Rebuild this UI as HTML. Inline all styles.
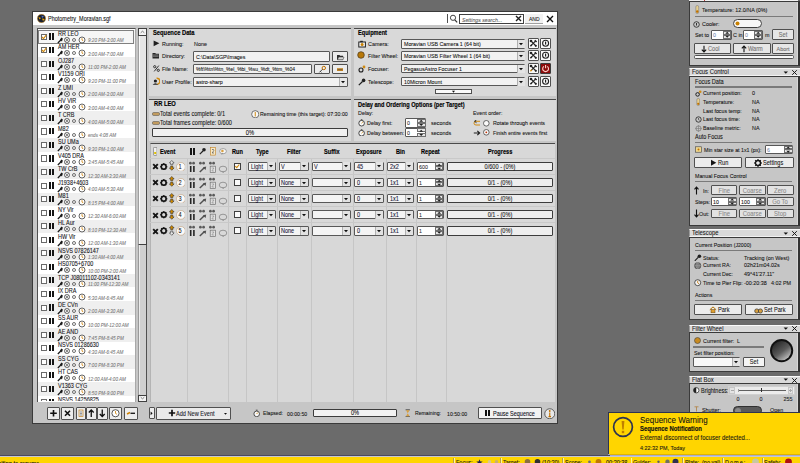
<!DOCTYPE html>
<html><head><meta charset="utf-8"><style>
html,body{margin:0;padding:0;}
body{width:800px;height:463px;overflow:hidden;position:relative;background:#6b6b6b;font-family:"Liberation Sans",sans-serif;}
div,svg{position:absolute;}
.t{white-space:nowrap;-webkit-text-stroke:0.09px currentColor;}
</style></head><body>
<div style="left:32px;top:11px;width:526px;height:413px;background:#c6c6c6;border:1px solid #3a3a3a;box-sizing:border-box;"></div>
<div style="left:33px;top:12px;width:524px;height:13px;background:#ffffff;"></div>
<svg style="left:37px;top:14px;" width="9" height="9" viewBox="0 0 9 9"><circle cx="4.5" cy="4.5" r="4.2" fill="#1a2030" stroke="#d9a040" stroke-width="0.6"/><path d="M1.5 3 L4 4 L2.5 5.5Z" fill="#f0a800"/><path d="M5 4.5 L7.8 5 L6 7Z" fill="#f0a800"/><path d="M4.5 1.5 L7 2.5 L5 4Z" fill="#5070c0"/></svg>
<div class="t" style="left:48px;transform:scaleX(0.8696);transform-origin:0 0;top:15.60px;font-size:6.32px;line-height:6.32px;color:#141414;">Photometry_Moravian.sgf</div>
<div style="left:447px;top:14px;width:0.6px;height:9px;background:#505050;"></div>
<svg style="left:449px;top:14px;" width="9" height="9" viewBox="0 0 9 9"><circle cx="4" cy="3.8" r="2.6" fill="none" stroke="#303030" stroke-width="0.9"/><path d="M5.8 5.8 L8.2 8.4" stroke="#303030" stroke-width="1.2"/></svg>
<div style="left:459px;top:13.5px;width:65px;height:10px;background:#fff;border:0.8px solid #404040;box-sizing:border-box;"></div>
<div class="t" style="left:461.5px;transform:scaleX(0.8696);transform-origin:0 0;top:16.68px;font-size:5.98px;line-height:5.98px;color:#606060;font-style:italic;">Settings search...</div>
<svg style="left:514.5px;top:15px;" width="7" height="7" viewBox="0 0 7 7"><path d="M1 1 L6 6 M6 1 L1 6" stroke="#202020" stroke-width="1.4"/></svg>
<div style="left:525px;top:13.5px;width:18px;height:10px;background:#f2f2f2;border-bottom:0.8px solid #a0a0a0;box-sizing:border-box;"></div>
<div class="t" style="left:528.5px;transform:scaleX(0.8696);transform-origin:0 0;top:16.80px;font-size:5.75px;line-height:5.75px;color:#141414;">AND</div>
<svg style="left:546px;top:14.5px;" width="8" height="8" viewBox="0 0 8 8"><path d="M1 1 L7 7 M7 1 L1 7" stroke="#101010" stroke-width="1.4"/></svg>
<div style="left:37px;top:28px;width:99px;height:374px;background:#ffffff;border-top:1px solid #505050;border-left:1px solid #505050;border-right:1px solid #a8a8a8;box-sizing:border-box;"></div>
<div style="left:38px;top:29px;width:97px;height:372px;overflow:hidden;">
<div style="left:0;top:1.00px;width:97px;height:13.55px;background:#f6f6f6;"></div>
<div style="left:0;top:1.00px;width:96px;height:13.55px;border:0.8px solid #808080;box-sizing:border-box;"></div>
<div style="left:3px;top:4.50px;width:6.2px;height:6.2px;background:#fff;border:1px solid #6a6a6a;box-sizing:border-box;"></div>
<svg style="left:3.3px;top:4.60px" width="6" height="6" viewBox="0 0 6 6"><path d="M1 3 L2.5 4.6 L5.2 1.2" fill="none" stroke="#d08a10" stroke-width="1.1"/></svg>
<div style="left:11.3px;top:4.40px;width:1.9px;height:6.2px;background:#151515;"></div>
<div style="left:14.4px;top:4.40px;width:1.9px;height:6.2px;background:#151515;"></div>
<div class="t" style="left:19.5px;transform:scaleX(0.8696);transform-origin:0 0;top:1.70px;font-size:6.32px;line-height:6.32px;color:#141418;">RR LEO</div>
<svg style="left:19px;top:6.70px" width="30" height="8" viewBox="0 0 30 8"><path d="M0.8 7 L3.8 4" stroke="#1a1a1a" stroke-width="1.2"/><path d="M2.8 3.6 L5 5.6 L5.8 2.4 L4.6 1.6Z" fill="#1a1a1a"/><circle cx="10" cy="4" r="2.6" fill="#e8e8e8" stroke="#606060" stroke-width="0.8"/><path d="M8.2 2.2 L11.8 5.8 M11.8 2.2 L8.2 5.8" stroke="#606060" stroke-width="0.7"/><circle cx="17" cy="4" r="1.5" fill="none" stroke="#606060" stroke-width="0.9"/><circle cx="25" cy="4" r="3" fill="#fff" stroke="#404040" stroke-width="0.8"/><path d="M25 2.2 V4.1 L26.3 4.8" stroke="#d08000" stroke-width="0.8" fill="none"/></svg>
<div class="t" style="left:50px;transform:scaleX(0.8696);transform-origin:0 0;top:9.23px;font-size:5.29px;line-height:5.29px;color:#7a7a7a;font-style:italic;">9:20 PM-3:00 AM</div>
<div style="left:0;top:14.55px;width:97px;height:13.55px;background:#ffffff;"></div>
<div style="left:3px;top:18.05px;width:6.2px;height:6.2px;background:#fff;border:1px solid #6a6a6a;box-sizing:border-box;"></div>
<svg style="left:3.3px;top:18.15px" width="6" height="6" viewBox="0 0 6 6"><path d="M1 3 L2.5 4.6 L5.2 1.2" fill="none" stroke="#d08a10" stroke-width="1.1"/></svg>
<div style="left:11.3px;top:17.95px;width:1.9px;height:6.2px;background:#151515;"></div>
<div style="left:14.4px;top:17.95px;width:1.9px;height:6.2px;background:#151515;"></div>
<div class="t" style="left:19.5px;transform:scaleX(0.8696);transform-origin:0 0;top:15.25px;font-size:6.32px;line-height:6.32px;color:#141418;">AM HER</div>
<svg style="left:19px;top:20.25px" width="30" height="8" viewBox="0 0 30 8"><path d="M0.8 7 L3.8 4" stroke="#1a1a1a" stroke-width="1.2"/><path d="M2.8 3.6 L5 5.6 L5.8 2.4 L4.6 1.6Z" fill="#1a1a1a"/><circle cx="10" cy="4" r="2.6" fill="#e8e8e8" stroke="#606060" stroke-width="0.8"/><path d="M8.2 2.2 L11.8 5.8 M11.8 2.2 L8.2 5.8" stroke="#606060" stroke-width="0.7"/><circle cx="17" cy="4" r="1.5" fill="none" stroke="#606060" stroke-width="0.9"/><circle cx="25" cy="4" r="3" fill="#fff" stroke="#404040" stroke-width="0.8"/><path d="M25 2.2 V4.1 L26.3 4.8" stroke="#d08000" stroke-width="0.8" fill="none"/></svg>
<div class="t" style="left:50px;transform:scaleX(0.8696);transform-origin:0 0;top:22.78px;font-size:5.29px;line-height:5.29px;color:#7a7a7a;font-style:italic;">3:00 AM-7:00 AM</div>
<div style="left:0;top:28.10px;width:97px;height:13.55px;background:#efefef;"></div>
<div style="left:3px;top:31.60px;width:6.2px;height:6.2px;background:#fff;border:1px solid #6a6a6a;box-sizing:border-box;"></div>
<div style="left:11.3px;top:31.50px;width:1.9px;height:6.2px;background:#151515;"></div>
<div style="left:14.4px;top:31.50px;width:1.9px;height:6.2px;background:#151515;"></div>
<div class="t" style="left:19.5px;transform:scaleX(0.8696);transform-origin:0 0;top:28.80px;font-size:6.32px;line-height:6.32px;color:#141418;">OJ287</div>
<svg style="left:19px;top:33.80px" width="30" height="8" viewBox="0 0 30 8"><path d="M0.8 7 L3.8 4" stroke="#1a1a1a" stroke-width="1.2"/><path d="M2.8 3.6 L5 5.6 L5.8 2.4 L4.6 1.6Z" fill="#1a1a1a"/><circle cx="10" cy="4" r="2.6" fill="#e8e8e8" stroke="#606060" stroke-width="0.8"/><path d="M8.2 2.2 L11.8 5.8 M11.8 2.2 L8.2 5.8" stroke="#606060" stroke-width="0.7"/><circle cx="17" cy="4" r="1.5" fill="none" stroke="#606060" stroke-width="0.9"/><circle cx="25" cy="4" r="3" fill="#fff" stroke="#404040" stroke-width="0.8"/><path d="M25 2.2 V4.1 L26.3 4.8" stroke="#d08000" stroke-width="0.8" fill="none"/></svg>
<div class="t" style="left:50px;transform:scaleX(0.8696);transform-origin:0 0;top:36.33px;font-size:5.29px;line-height:5.29px;color:#7a7a7a;font-style:italic;">11:00 PM-2:00 AM</div>
<div style="left:0;top:41.65px;width:97px;height:13.55px;background:#ffffff;"></div>
<div style="left:3px;top:45.15px;width:6.2px;height:6.2px;background:#fff;border:1px solid #6a6a6a;box-sizing:border-box;"></div>
<div style="left:11.3px;top:45.05px;width:1.9px;height:6.2px;background:#151515;"></div>
<div style="left:14.4px;top:45.05px;width:1.9px;height:6.2px;background:#151515;"></div>
<div class="t" style="left:19.5px;transform:scaleX(0.8696);transform-origin:0 0;top:42.35px;font-size:6.32px;line-height:6.32px;color:#141418;">V1159 ORI</div>
<svg style="left:19px;top:47.35px" width="30" height="8" viewBox="0 0 30 8"><path d="M0.8 7 L3.8 4" stroke="#1a1a1a" stroke-width="1.2"/><path d="M2.8 3.6 L5 5.6 L5.8 2.4 L4.6 1.6Z" fill="#1a1a1a"/><circle cx="10" cy="4" r="2.6" fill="#e8e8e8" stroke="#606060" stroke-width="0.8"/><path d="M8.2 2.2 L11.8 5.8 M11.8 2.2 L8.2 5.8" stroke="#606060" stroke-width="0.7"/><circle cx="17" cy="4" r="1.5" fill="none" stroke="#606060" stroke-width="0.9"/><circle cx="25" cy="4" r="3" fill="#fff" stroke="#404040" stroke-width="0.8"/><path d="M25 2.2 V4.1 L26.3 4.8" stroke="#d08000" stroke-width="0.8" fill="none"/></svg>
<div class="t" style="left:50px;transform:scaleX(0.8696);transform-origin:0 0;top:49.88px;font-size:5.29px;line-height:5.29px;color:#7a7a7a;font-style:italic;">9:20 PM-11:00 PM</div>
<div style="left:0;top:55.20px;width:97px;height:13.55px;background:#efefef;"></div>
<div style="left:3px;top:58.70px;width:6.2px;height:6.2px;background:#fff;border:1px solid #6a6a6a;box-sizing:border-box;"></div>
<div style="left:11.3px;top:58.60px;width:1.9px;height:6.2px;background:#151515;"></div>
<div style="left:14.4px;top:58.60px;width:1.9px;height:6.2px;background:#151515;"></div>
<div class="t" style="left:19.5px;transform:scaleX(0.8696);transform-origin:0 0;top:55.90px;font-size:6.32px;line-height:6.32px;color:#141418;">Z UMI</div>
<svg style="left:19px;top:60.90px" width="30" height="8" viewBox="0 0 30 8"><path d="M0.8 7 L3.8 4" stroke="#1a1a1a" stroke-width="1.2"/><path d="M2.8 3.6 L5 5.6 L5.8 2.4 L4.6 1.6Z" fill="#1a1a1a"/><circle cx="10" cy="4" r="2.6" fill="#e8e8e8" stroke="#606060" stroke-width="0.8"/><path d="M8.2 2.2 L11.8 5.8 M11.8 2.2 L8.2 5.8" stroke="#606060" stroke-width="0.7"/><circle cx="17" cy="4" r="1.5" fill="none" stroke="#606060" stroke-width="0.9"/><circle cx="25" cy="4" r="3" fill="#fff" stroke="#404040" stroke-width="0.8"/><path d="M25 2.2 V4.1 L26.3 4.8" stroke="#d08000" stroke-width="0.8" fill="none"/></svg>
<div class="t" style="left:50px;transform:scaleX(0.8696);transform-origin:0 0;top:63.43px;font-size:5.29px;line-height:5.29px;color:#7a7a7a;font-style:italic;">2:00 AM-3:00 AM</div>
<div style="left:0;top:68.75px;width:97px;height:13.55px;background:#ffffff;"></div>
<div style="left:3px;top:72.25px;width:6.2px;height:6.2px;background:#fff;border:1px solid #6a6a6a;box-sizing:border-box;"></div>
<div style="left:11.3px;top:72.15px;width:1.9px;height:6.2px;background:#151515;"></div>
<div style="left:14.4px;top:72.15px;width:1.9px;height:6.2px;background:#151515;"></div>
<div class="t" style="left:19.5px;transform:scaleX(0.8696);transform-origin:0 0;top:69.45px;font-size:6.32px;line-height:6.32px;color:#141418;">HV VIR</div>
<svg style="left:19px;top:74.45px" width="30" height="8" viewBox="0 0 30 8"><path d="M0.8 7 L3.8 4" stroke="#1a1a1a" stroke-width="1.2"/><path d="M2.8 3.6 L5 5.6 L5.8 2.4 L4.6 1.6Z" fill="#1a1a1a"/><circle cx="10" cy="4" r="2.6" fill="#e8e8e8" stroke="#606060" stroke-width="0.8"/><path d="M8.2 2.2 L11.8 5.8 M11.8 2.2 L8.2 5.8" stroke="#606060" stroke-width="0.7"/><circle cx="17" cy="4" r="1.5" fill="none" stroke="#606060" stroke-width="0.9"/><circle cx="25" cy="4" r="3" fill="#fff" stroke="#404040" stroke-width="0.8"/><path d="M25 2.2 V4.1 L26.3 4.8" stroke="#d08000" stroke-width="0.8" fill="none"/></svg>
<div class="t" style="left:50px;transform:scaleX(0.8696);transform-origin:0 0;top:76.98px;font-size:5.29px;line-height:5.29px;color:#7a7a7a;font-style:italic;">3:00 AM-4:00 AM</div>
<div style="left:0;top:82.30px;width:97px;height:13.55px;background:#efefef;"></div>
<div style="left:3px;top:85.80px;width:6.2px;height:6.2px;background:#fff;border:1px solid #6a6a6a;box-sizing:border-box;"></div>
<div style="left:11.3px;top:85.70px;width:1.9px;height:6.2px;background:#151515;"></div>
<div style="left:14.4px;top:85.70px;width:1.9px;height:6.2px;background:#151515;"></div>
<div class="t" style="left:19.5px;transform:scaleX(0.8696);transform-origin:0 0;top:83.00px;font-size:6.32px;line-height:6.32px;color:#141418;">T CRB</div>
<svg style="left:19px;top:88.00px" width="30" height="8" viewBox="0 0 30 8"><path d="M0.8 7 L3.8 4" stroke="#1a1a1a" stroke-width="1.2"/><path d="M2.8 3.6 L5 5.6 L5.8 2.4 L4.6 1.6Z" fill="#1a1a1a"/><circle cx="10" cy="4" r="2.6" fill="#e8e8e8" stroke="#606060" stroke-width="0.8"/><path d="M8.2 2.2 L11.8 5.8 M11.8 2.2 L8.2 5.8" stroke="#606060" stroke-width="0.7"/><circle cx="17" cy="4" r="1.5" fill="none" stroke="#606060" stroke-width="0.9"/><circle cx="25" cy="4" r="3" fill="#fff" stroke="#404040" stroke-width="0.8"/><path d="M25 2.2 V4.1 L26.3 4.8" stroke="#d08000" stroke-width="0.8" fill="none"/></svg>
<div class="t" style="left:50px;transform:scaleX(0.8696);transform-origin:0 0;top:90.53px;font-size:5.29px;line-height:5.29px;color:#7a7a7a;font-style:italic;">4:00 AM-5:00 AM</div>
<div style="left:0;top:95.85px;width:97px;height:13.55px;background:#ffffff;"></div>
<div style="left:3px;top:99.35px;width:6.2px;height:6.2px;background:#fff;border:1px solid #6a6a6a;box-sizing:border-box;"></div>
<div style="left:11.3px;top:99.25px;width:1.9px;height:6.2px;background:#151515;"></div>
<div style="left:14.4px;top:99.25px;width:1.9px;height:6.2px;background:#151515;"></div>
<div class="t" style="left:19.5px;transform:scaleX(0.8696);transform-origin:0 0;top:96.55px;font-size:6.32px;line-height:6.32px;color:#141418;">M82</div>
<svg style="left:19px;top:101.55px" width="30" height="8" viewBox="0 0 30 8"><path d="M0.8 7 L3.8 4" stroke="#1a1a1a" stroke-width="1.2"/><path d="M2.8 3.6 L5 5.6 L5.8 2.4 L4.6 1.6Z" fill="#1a1a1a"/><circle cx="10" cy="4" r="2.6" fill="#e8e8e8" stroke="#606060" stroke-width="0.8"/><path d="M8.2 2.2 L11.8 5.8 M11.8 2.2 L8.2 5.8" stroke="#606060" stroke-width="0.7"/><circle cx="17" cy="4" r="1.5" fill="none" stroke="#606060" stroke-width="0.9"/><circle cx="25" cy="4" r="3" fill="#fff" stroke="#404040" stroke-width="0.8"/><path d="M25 2.2 V4.1 L26.3 4.8" stroke="#d08000" stroke-width="0.8" fill="none"/></svg>
<div class="t" style="left:50px;transform:scaleX(0.8696);transform-origin:0 0;top:104.08px;font-size:5.29px;line-height:5.29px;color:#7a7a7a;font-style:italic;">ends 4:08 AM</div>
<div style="left:0;top:109.40px;width:97px;height:13.55px;background:#efefef;"></div>
<div style="left:3px;top:112.90px;width:6.2px;height:6.2px;background:#fff;border:1px solid #6a6a6a;box-sizing:border-box;"></div>
<div style="left:11.3px;top:112.80px;width:1.9px;height:6.2px;background:#151515;"></div>
<div style="left:14.4px;top:112.80px;width:1.9px;height:6.2px;background:#151515;"></div>
<div class="t" style="left:19.5px;transform:scaleX(0.8696);transform-origin:0 0;top:110.10px;font-size:6.32px;line-height:6.32px;color:#141418;">SU UMa</div>
<svg style="left:19px;top:115.10px" width="30" height="8" viewBox="0 0 30 8"><path d="M0.8 7 L3.8 4" stroke="#1a1a1a" stroke-width="1.2"/><path d="M2.8 3.6 L5 5.6 L5.8 2.4 L4.6 1.6Z" fill="#1a1a1a"/><circle cx="10" cy="4" r="2.6" fill="#e8e8e8" stroke="#606060" stroke-width="0.8"/><path d="M8.2 2.2 L11.8 5.8 M11.8 2.2 L8.2 5.8" stroke="#606060" stroke-width="0.7"/><circle cx="17" cy="4" r="1.5" fill="none" stroke="#606060" stroke-width="0.9"/><circle cx="25" cy="4" r="3" fill="#fff" stroke="#404040" stroke-width="0.8"/><path d="M25 2.2 V4.1 L26.3 4.8" stroke="#d08000" stroke-width="0.8" fill="none"/></svg>
<div class="t" style="left:50px;transform:scaleX(0.8696);transform-origin:0 0;top:117.63px;font-size:5.29px;line-height:5.29px;color:#7a7a7a;font-style:italic;">9:30 PM-1:00 AM</div>
<div style="left:0;top:122.95px;width:97px;height:13.55px;background:#ffffff;"></div>
<div style="left:3px;top:126.45px;width:6.2px;height:6.2px;background:#fff;border:1px solid #6a6a6a;box-sizing:border-box;"></div>
<div style="left:11.3px;top:126.35px;width:1.9px;height:6.2px;background:#151515;"></div>
<div style="left:14.4px;top:126.35px;width:1.9px;height:6.2px;background:#151515;"></div>
<div class="t" style="left:19.5px;transform:scaleX(0.8696);transform-origin:0 0;top:123.65px;font-size:6.32px;line-height:6.32px;color:#141418;">V405 DRA</div>
<svg style="left:19px;top:128.65px" width="30" height="8" viewBox="0 0 30 8"><path d="M0.8 7 L3.8 4" stroke="#1a1a1a" stroke-width="1.2"/><path d="M2.8 3.6 L5 5.6 L5.8 2.4 L4.6 1.6Z" fill="#1a1a1a"/><circle cx="10" cy="4" r="2.6" fill="#e8e8e8" stroke="#606060" stroke-width="0.8"/><path d="M8.2 2.2 L11.8 5.8 M11.8 2.2 L8.2 5.8" stroke="#606060" stroke-width="0.7"/><circle cx="17" cy="4" r="1.5" fill="none" stroke="#606060" stroke-width="0.9"/><circle cx="25" cy="4" r="3" fill="#fff" stroke="#404040" stroke-width="0.8"/><path d="M25 2.2 V4.1 L26.3 4.8" stroke="#d08000" stroke-width="0.8" fill="none"/></svg>
<div class="t" style="left:50px;transform:scaleX(0.8696);transform-origin:0 0;top:131.18px;font-size:5.29px;line-height:5.29px;color:#7a7a7a;font-style:italic;">3:45 AM-5:45 AM</div>
<div style="left:0;top:136.50px;width:97px;height:13.55px;background:#efefef;"></div>
<div style="left:3px;top:140.00px;width:6.2px;height:6.2px;background:#fff;border:1px solid #6a6a6a;box-sizing:border-box;"></div>
<div style="left:11.3px;top:139.90px;width:1.9px;height:6.2px;background:#151515;"></div>
<div style="left:14.4px;top:139.90px;width:1.9px;height:6.2px;background:#151515;"></div>
<div class="t" style="left:19.5px;transform:scaleX(0.8696);transform-origin:0 0;top:137.20px;font-size:6.32px;line-height:6.32px;color:#141418;">TW CrB</div>
<svg style="left:19px;top:142.20px" width="30" height="8" viewBox="0 0 30 8"><path d="M0.8 7 L3.8 4" stroke="#1a1a1a" stroke-width="1.2"/><path d="M2.8 3.6 L5 5.6 L5.8 2.4 L4.6 1.6Z" fill="#1a1a1a"/><circle cx="10" cy="4" r="2.6" fill="#e8e8e8" stroke="#606060" stroke-width="0.8"/><path d="M8.2 2.2 L11.8 5.8 M11.8 2.2 L8.2 5.8" stroke="#606060" stroke-width="0.7"/><circle cx="17" cy="4" r="1.5" fill="none" stroke="#606060" stroke-width="0.9"/><circle cx="25" cy="4" r="3" fill="#fff" stroke="#404040" stroke-width="0.8"/><path d="M25 2.2 V4.1 L26.3 4.8" stroke="#d08000" stroke-width="0.8" fill="none"/></svg>
<div class="t" style="left:50px;transform:scaleX(0.8696);transform-origin:0 0;top:144.73px;font-size:5.29px;line-height:5.29px;color:#7a7a7a;font-style:italic;">12:30 AM-3:30 AM</div>
<div style="left:0;top:150.05px;width:97px;height:13.55px;background:#ffffff;"></div>
<div style="left:3px;top:153.55px;width:6.2px;height:6.2px;background:#fff;border:1px solid #6a6a6a;box-sizing:border-box;"></div>
<div style="left:11.3px;top:153.45px;width:1.9px;height:6.2px;background:#151515;"></div>
<div style="left:14.4px;top:153.45px;width:1.9px;height:6.2px;background:#151515;"></div>
<div class="t" style="left:19.5px;transform:scaleX(0.8696);transform-origin:0 0;top:150.75px;font-size:6.32px;line-height:6.32px;color:#141418;">J1938+4603</div>
<svg style="left:19px;top:155.75px" width="30" height="8" viewBox="0 0 30 8"><path d="M0.8 7 L3.8 4" stroke="#1a1a1a" stroke-width="1.2"/><path d="M2.8 3.6 L5 5.6 L5.8 2.4 L4.6 1.6Z" fill="#1a1a1a"/><circle cx="10" cy="4" r="2.6" fill="#e8e8e8" stroke="#606060" stroke-width="0.8"/><path d="M8.2 2.2 L11.8 5.8 M11.8 2.2 L8.2 5.8" stroke="#606060" stroke-width="0.7"/><circle cx="17" cy="4" r="1.5" fill="none" stroke="#606060" stroke-width="0.9"/><circle cx="25" cy="4" r="3" fill="#fff" stroke="#404040" stroke-width="0.8"/><path d="M25 2.2 V4.1 L26.3 4.8" stroke="#d08000" stroke-width="0.8" fill="none"/></svg>
<div class="t" style="left:50px;transform:scaleX(0.8696);transform-origin:0 0;top:158.28px;font-size:5.29px;line-height:5.29px;color:#7a7a7a;font-style:italic;">4:00 AM-5:30 AM</div>
<div style="left:0;top:163.60px;width:97px;height:13.55px;background:#efefef;"></div>
<div style="left:3px;top:167.10px;width:6.2px;height:6.2px;background:#fff;border:1px solid #6a6a6a;box-sizing:border-box;"></div>
<div style="left:11.3px;top:167.00px;width:1.9px;height:6.2px;background:#151515;"></div>
<div style="left:14.4px;top:167.00px;width:1.9px;height:6.2px;background:#151515;"></div>
<div class="t" style="left:19.5px;transform:scaleX(0.8696);transform-origin:0 0;top:164.30px;font-size:6.32px;line-height:6.32px;color:#141418;">M81</div>
<svg style="left:19px;top:169.30px" width="30" height="8" viewBox="0 0 30 8"><path d="M0.8 7 L3.8 4" stroke="#1a1a1a" stroke-width="1.2"/><path d="M2.8 3.6 L5 5.6 L5.8 2.4 L4.6 1.6Z" fill="#1a1a1a"/><circle cx="10" cy="4" r="2.6" fill="#e8e8e8" stroke="#606060" stroke-width="0.8"/><path d="M8.2 2.2 L11.8 5.8 M11.8 2.2 L8.2 5.8" stroke="#606060" stroke-width="0.7"/><circle cx="17" cy="4" r="1.5" fill="none" stroke="#606060" stroke-width="0.9"/><circle cx="25" cy="4" r="3" fill="#fff" stroke="#404040" stroke-width="0.8"/><path d="M25 2.2 V4.1 L26.3 4.8" stroke="#d08000" stroke-width="0.8" fill="none"/></svg>
<div class="t" style="left:50px;transform:scaleX(0.8696);transform-origin:0 0;top:171.83px;font-size:5.29px;line-height:5.29px;color:#7a7a7a;font-style:italic;">8:15 PM-4:00 AM</div>
<div style="left:0;top:177.15px;width:97px;height:13.55px;background:#ffffff;"></div>
<div style="left:3px;top:180.65px;width:6.2px;height:6.2px;background:#fff;border:1px solid #6a6a6a;box-sizing:border-box;"></div>
<div style="left:11.3px;top:180.55px;width:1.9px;height:6.2px;background:#151515;"></div>
<div style="left:14.4px;top:180.55px;width:1.9px;height:6.2px;background:#151515;"></div>
<div class="t" style="left:19.5px;transform:scaleX(0.8696);transform-origin:0 0;top:177.85px;font-size:6.32px;line-height:6.32px;color:#141418;">NY Vir</div>
<svg style="left:19px;top:182.85px" width="30" height="8" viewBox="0 0 30 8"><path d="M0.8 7 L3.8 4" stroke="#1a1a1a" stroke-width="1.2"/><path d="M2.8 3.6 L5 5.6 L5.8 2.4 L4.6 1.6Z" fill="#1a1a1a"/><circle cx="10" cy="4" r="2.6" fill="#e8e8e8" stroke="#606060" stroke-width="0.8"/><path d="M8.2 2.2 L11.8 5.8 M11.8 2.2 L8.2 5.8" stroke="#606060" stroke-width="0.7"/><circle cx="17" cy="4" r="1.5" fill="none" stroke="#606060" stroke-width="0.9"/><circle cx="25" cy="4" r="3" fill="#fff" stroke="#404040" stroke-width="0.8"/><path d="M25 2.2 V4.1 L26.3 4.8" stroke="#d08000" stroke-width="0.8" fill="none"/></svg>
<div class="t" style="left:50px;transform:scaleX(0.8696);transform-origin:0 0;top:185.38px;font-size:5.29px;line-height:5.29px;color:#7a7a7a;font-style:italic;">12:30 AM-6:00 AM</div>
<div style="left:0;top:190.70px;width:97px;height:13.55px;background:#efefef;"></div>
<div style="left:3px;top:194.20px;width:6.2px;height:6.2px;background:#fff;border:1px solid #6a6a6a;box-sizing:border-box;"></div>
<div style="left:11.3px;top:194.10px;width:1.9px;height:6.2px;background:#151515;"></div>
<div style="left:14.4px;top:194.10px;width:1.9px;height:6.2px;background:#151515;"></div>
<div class="t" style="left:19.5px;transform:scaleX(0.8696);transform-origin:0 0;top:191.40px;font-size:6.32px;line-height:6.32px;color:#141418;">HL Aur</div>
<svg style="left:19px;top:196.40px" width="30" height="8" viewBox="0 0 30 8"><path d="M0.8 7 L3.8 4" stroke="#1a1a1a" stroke-width="1.2"/><path d="M2.8 3.6 L5 5.6 L5.8 2.4 L4.6 1.6Z" fill="#1a1a1a"/><circle cx="10" cy="4" r="2.6" fill="#e8e8e8" stroke="#606060" stroke-width="0.8"/><path d="M8.2 2.2 L11.8 5.8 M11.8 2.2 L8.2 5.8" stroke="#606060" stroke-width="0.7"/><circle cx="17" cy="4" r="1.5" fill="none" stroke="#606060" stroke-width="0.9"/><circle cx="25" cy="4" r="3" fill="#fff" stroke="#404040" stroke-width="0.8"/><path d="M25 2.2 V4.1 L26.3 4.8" stroke="#d08000" stroke-width="0.8" fill="none"/></svg>
<div class="t" style="left:50px;transform:scaleX(0.8696);transform-origin:0 0;top:198.93px;font-size:5.29px;line-height:5.29px;color:#7a7a7a;font-style:italic;">8:10 PM-12:30 AM</div>
<div style="left:0;top:204.25px;width:97px;height:13.55px;background:#ffffff;"></div>
<div style="left:3px;top:207.75px;width:6.2px;height:6.2px;background:#fff;border:1px solid #6a6a6a;box-sizing:border-box;"></div>
<div style="left:11.3px;top:207.65px;width:1.9px;height:6.2px;background:#151515;"></div>
<div style="left:14.4px;top:207.65px;width:1.9px;height:6.2px;background:#151515;"></div>
<div class="t" style="left:19.5px;transform:scaleX(0.8696);transform-origin:0 0;top:204.95px;font-size:6.32px;line-height:6.32px;color:#141418;">HW Vir</div>
<svg style="left:19px;top:209.95px" width="30" height="8" viewBox="0 0 30 8"><path d="M0.8 7 L3.8 4" stroke="#1a1a1a" stroke-width="1.2"/><path d="M2.8 3.6 L5 5.6 L5.8 2.4 L4.6 1.6Z" fill="#1a1a1a"/><circle cx="10" cy="4" r="2.6" fill="#e8e8e8" stroke="#606060" stroke-width="0.8"/><path d="M8.2 2.2 L11.8 5.8 M11.8 2.2 L8.2 5.8" stroke="#606060" stroke-width="0.7"/><circle cx="17" cy="4" r="1.5" fill="none" stroke="#606060" stroke-width="0.9"/><circle cx="25" cy="4" r="3" fill="#fff" stroke="#404040" stroke-width="0.8"/><path d="M25 2.2 V4.1 L26.3 4.8" stroke="#d08000" stroke-width="0.8" fill="none"/></svg>
<div class="t" style="left:50px;transform:scaleX(0.8696);transform-origin:0 0;top:212.48px;font-size:5.29px;line-height:5.29px;color:#7a7a7a;font-style:italic;">12:00 AM-1:30 AM</div>
<div style="left:0;top:217.80px;width:97px;height:13.55px;background:#efefef;"></div>
<div style="left:3px;top:221.30px;width:6.2px;height:6.2px;background:#fff;border:1px solid #6a6a6a;box-sizing:border-box;"></div>
<div style="left:11.3px;top:221.20px;width:1.9px;height:6.2px;background:#151515;"></div>
<div style="left:14.4px;top:221.20px;width:1.9px;height:6.2px;background:#151515;"></div>
<div class="t" style="left:19.5px;transform:scaleX(0.8696);transform-origin:0 0;top:218.50px;font-size:6.32px;line-height:6.32px;color:#141418;">NSVS 07826147</div>
<svg style="left:19px;top:223.50px" width="30" height="8" viewBox="0 0 30 8"><path d="M0.8 7 L3.8 4" stroke="#1a1a1a" stroke-width="1.2"/><path d="M2.8 3.6 L5 5.6 L5.8 2.4 L4.6 1.6Z" fill="#1a1a1a"/><circle cx="10" cy="4" r="2.6" fill="#e8e8e8" stroke="#606060" stroke-width="0.8"/><path d="M8.2 2.2 L11.8 5.8 M11.8 2.2 L8.2 5.8" stroke="#606060" stroke-width="0.7"/><circle cx="17" cy="4" r="1.5" fill="none" stroke="#606060" stroke-width="0.9"/><circle cx="25" cy="4" r="3" fill="#fff" stroke="#404040" stroke-width="0.8"/><path d="M25 2.2 V4.1 L26.3 4.8" stroke="#d08000" stroke-width="0.8" fill="none"/></svg>
<div class="t" style="left:50px;transform:scaleX(0.8696);transform-origin:0 0;top:226.03px;font-size:5.29px;line-height:5.29px;color:#7a7a7a;font-style:italic;">1:30 AM-4:00 AM</div>
<div style="left:0;top:231.35px;width:97px;height:13.55px;background:#ffffff;"></div>
<div style="left:3px;top:234.85px;width:6.2px;height:6.2px;background:#fff;border:1px solid #6a6a6a;box-sizing:border-box;"></div>
<div style="left:11.3px;top:234.75px;width:1.9px;height:6.2px;background:#151515;"></div>
<div style="left:14.4px;top:234.75px;width:1.9px;height:6.2px;background:#151515;"></div>
<div class="t" style="left:19.5px;transform:scaleX(0.8696);transform-origin:0 0;top:232.05px;font-size:6.32px;line-height:6.32px;color:#141418;">HS0705+6700</div>
<svg style="left:19px;top:237.05px" width="30" height="8" viewBox="0 0 30 8"><path d="M0.8 7 L3.8 4" stroke="#1a1a1a" stroke-width="1.2"/><path d="M2.8 3.6 L5 5.6 L5.8 2.4 L4.6 1.6Z" fill="#1a1a1a"/><circle cx="10" cy="4" r="2.6" fill="#e8e8e8" stroke="#606060" stroke-width="0.8"/><path d="M8.2 2.2 L11.8 5.8 M11.8 2.2 L8.2 5.8" stroke="#606060" stroke-width="0.7"/><circle cx="17" cy="4" r="1.5" fill="none" stroke="#606060" stroke-width="0.9"/><circle cx="25" cy="4" r="3" fill="#fff" stroke="#404040" stroke-width="0.8"/><path d="M25 2.2 V4.1 L26.3 4.8" stroke="#d08000" stroke-width="0.8" fill="none"/></svg>
<div class="t" style="left:50px;transform:scaleX(0.8696);transform-origin:0 0;top:239.58px;font-size:5.29px;line-height:5.29px;color:#7a7a7a;font-style:italic;">10:00 PM-2:00 AM</div>
<div style="left:0;top:244.90px;width:97px;height:13.55px;background:#efefef;"></div>
<div style="left:3px;top:248.40px;width:6.2px;height:6.2px;background:#fff;border:1px solid #6a6a6a;box-sizing:border-box;"></div>
<div style="left:11.3px;top:248.30px;width:1.9px;height:6.2px;background:#151515;"></div>
<div style="left:14.4px;top:248.30px;width:1.9px;height:6.2px;background:#151515;"></div>
<div class="t" style="left:19.5px;transform:scaleX(0.8696);transform-origin:0 0;top:245.60px;font-size:6.32px;line-height:6.32px;color:#141418;">TCP J08011102-0343141</div>
<svg style="left:19px;top:250.60px" width="30" height="8" viewBox="0 0 30 8"><path d="M0.8 7 L3.8 4" stroke="#1a1a1a" stroke-width="1.2"/><path d="M2.8 3.6 L5 5.6 L5.8 2.4 L4.6 1.6Z" fill="#1a1a1a"/><circle cx="10" cy="4" r="2.6" fill="#e8e8e8" stroke="#606060" stroke-width="0.8"/><path d="M8.2 2.2 L11.8 5.8 M11.8 2.2 L8.2 5.8" stroke="#606060" stroke-width="0.7"/><circle cx="17" cy="4" r="1.5" fill="none" stroke="#606060" stroke-width="0.9"/><circle cx="25" cy="4" r="3" fill="#fff" stroke="#404040" stroke-width="0.8"/><path d="M25 2.2 V4.1 L26.3 4.8" stroke="#d08000" stroke-width="0.8" fill="none"/></svg>
<div class="t" style="left:50px;transform:scaleX(0.8696);transform-origin:0 0;top:253.13px;font-size:5.29px;line-height:5.29px;color:#7a7a7a;font-style:italic;">11:00 PM-12:30 AM</div>
<div style="left:0;top:258.45px;width:97px;height:13.55px;background:#ffffff;"></div>
<div style="left:3px;top:261.95px;width:6.2px;height:6.2px;background:#fff;border:1px solid #6a6a6a;box-sizing:border-box;"></div>
<div style="left:11.3px;top:261.85px;width:1.9px;height:6.2px;background:#151515;"></div>
<div style="left:14.4px;top:261.85px;width:1.9px;height:6.2px;background:#151515;"></div>
<div class="t" style="left:19.5px;transform:scaleX(0.8696);transform-origin:0 0;top:259.15px;font-size:6.32px;line-height:6.32px;color:#141418;">IX DRA</div>
<svg style="left:19px;top:264.15px" width="30" height="8" viewBox="0 0 30 8"><path d="M0.8 7 L3.8 4" stroke="#1a1a1a" stroke-width="1.2"/><path d="M2.8 3.6 L5 5.6 L5.8 2.4 L4.6 1.6Z" fill="#1a1a1a"/><circle cx="10" cy="4" r="2.6" fill="#e8e8e8" stroke="#606060" stroke-width="0.8"/><path d="M8.2 2.2 L11.8 5.8 M11.8 2.2 L8.2 5.8" stroke="#606060" stroke-width="0.7"/><circle cx="17" cy="4" r="1.5" fill="none" stroke="#606060" stroke-width="0.9"/><circle cx="25" cy="4" r="3" fill="#fff" stroke="#404040" stroke-width="0.8"/><path d="M25 2.2 V4.1 L26.3 4.8" stroke="#d08000" stroke-width="0.8" fill="none"/></svg>
<div class="t" style="left:50px;transform:scaleX(0.8696);transform-origin:0 0;top:266.68px;font-size:5.29px;line-height:5.29px;color:#7a7a7a;font-style:italic;">5:30 AM-6:45 AM</div>
<div style="left:0;top:272.00px;width:97px;height:13.55px;background:#efefef;"></div>
<div style="left:3px;top:275.50px;width:6.2px;height:6.2px;background:#fff;border:1px solid #6a6a6a;box-sizing:border-box;"></div>
<div style="left:11.3px;top:275.40px;width:1.9px;height:6.2px;background:#151515;"></div>
<div style="left:14.4px;top:275.40px;width:1.9px;height:6.2px;background:#151515;"></div>
<div class="t" style="left:19.5px;transform:scaleX(0.8696);transform-origin:0 0;top:272.70px;font-size:6.32px;line-height:6.32px;color:#141418;">DE CVn</div>
<svg style="left:19px;top:277.70px" width="30" height="8" viewBox="0 0 30 8"><path d="M0.8 7 L3.8 4" stroke="#1a1a1a" stroke-width="1.2"/><path d="M2.8 3.6 L5 5.6 L5.8 2.4 L4.6 1.6Z" fill="#1a1a1a"/><circle cx="10" cy="4" r="2.6" fill="#e8e8e8" stroke="#606060" stroke-width="0.8"/><path d="M8.2 2.2 L11.8 5.8 M11.8 2.2 L8.2 5.8" stroke="#606060" stroke-width="0.7"/><circle cx="17" cy="4" r="1.5" fill="none" stroke="#606060" stroke-width="0.9"/><circle cx="25" cy="4" r="3" fill="#fff" stroke="#404040" stroke-width="0.8"/><path d="M25 2.2 V4.1 L26.3 4.8" stroke="#d08000" stroke-width="0.8" fill="none"/></svg>
<div class="t" style="left:50px;transform:scaleX(0.8696);transform-origin:0 0;top:280.23px;font-size:5.29px;line-height:5.29px;color:#7a7a7a;font-style:italic;">2:00 AM-3:30 AM</div>
<div style="left:0;top:285.55px;width:97px;height:13.55px;background:#ffffff;"></div>
<div style="left:3px;top:289.05px;width:6.2px;height:6.2px;background:#fff;border:1px solid #6a6a6a;box-sizing:border-box;"></div>
<div style="left:11.3px;top:288.95px;width:1.9px;height:6.2px;background:#151515;"></div>
<div style="left:14.4px;top:288.95px;width:1.9px;height:6.2px;background:#151515;"></div>
<div class="t" style="left:19.5px;transform:scaleX(0.8696);transform-origin:0 0;top:286.25px;font-size:6.32px;line-height:6.32px;color:#141418;">SS AUR</div>
<svg style="left:19px;top:291.25px" width="30" height="8" viewBox="0 0 30 8"><path d="M0.8 7 L3.8 4" stroke="#1a1a1a" stroke-width="1.2"/><path d="M2.8 3.6 L5 5.6 L5.8 2.4 L4.6 1.6Z" fill="#1a1a1a"/><circle cx="10" cy="4" r="2.6" fill="#e8e8e8" stroke="#606060" stroke-width="0.8"/><path d="M8.2 2.2 L11.8 5.8 M11.8 2.2 L8.2 5.8" stroke="#606060" stroke-width="0.7"/><circle cx="17" cy="4" r="1.5" fill="none" stroke="#606060" stroke-width="0.9"/><circle cx="25" cy="4" r="3" fill="#fff" stroke="#404040" stroke-width="0.8"/><path d="M25 2.2 V4.1 L26.3 4.8" stroke="#d08000" stroke-width="0.8" fill="none"/></svg>
<div class="t" style="left:50px;transform:scaleX(0.8696);transform-origin:0 0;top:293.78px;font-size:5.29px;line-height:5.29px;color:#7a7a7a;font-style:italic;">10:00 PM-12:00 AM</div>
<div style="left:0;top:299.10px;width:97px;height:13.55px;background:#efefef;"></div>
<div style="left:3px;top:302.60px;width:6.2px;height:6.2px;background:#fff;border:1px solid #6a6a6a;box-sizing:border-box;"></div>
<div style="left:11.3px;top:302.50px;width:1.9px;height:6.2px;background:#151515;"></div>
<div style="left:14.4px;top:302.50px;width:1.9px;height:6.2px;background:#151515;"></div>
<div class="t" style="left:19.5px;transform:scaleX(0.8696);transform-origin:0 0;top:299.80px;font-size:6.32px;line-height:6.32px;color:#141418;">AE AND</div>
<svg style="left:19px;top:304.80px" width="30" height="8" viewBox="0 0 30 8"><path d="M0.8 7 L3.8 4" stroke="#1a1a1a" stroke-width="1.2"/><path d="M2.8 3.6 L5 5.6 L5.8 2.4 L4.6 1.6Z" fill="#1a1a1a"/><circle cx="10" cy="4" r="2.6" fill="#e8e8e8" stroke="#606060" stroke-width="0.8"/><path d="M8.2 2.2 L11.8 5.8 M11.8 2.2 L8.2 5.8" stroke="#606060" stroke-width="0.7"/><circle cx="17" cy="4" r="1.5" fill="none" stroke="#606060" stroke-width="0.9"/><circle cx="25" cy="4" r="3" fill="#fff" stroke="#404040" stroke-width="0.8"/><path d="M25 2.2 V4.1 L26.3 4.8" stroke="#d08000" stroke-width="0.8" fill="none"/></svg>
<div class="t" style="left:50px;transform:scaleX(0.8696);transform-origin:0 0;top:307.33px;font-size:5.29px;line-height:5.29px;color:#7a7a7a;font-style:italic;">7:45 PM-8:45 PM</div>
<div style="left:0;top:312.65px;width:97px;height:13.55px;background:#ffffff;"></div>
<div style="left:3px;top:316.15px;width:6.2px;height:6.2px;background:#fff;border:1px solid #6a6a6a;box-sizing:border-box;"></div>
<div style="left:11.3px;top:316.05px;width:1.9px;height:6.2px;background:#151515;"></div>
<div style="left:14.4px;top:316.05px;width:1.9px;height:6.2px;background:#151515;"></div>
<div class="t" style="left:19.5px;transform:scaleX(0.8696);transform-origin:0 0;top:313.35px;font-size:6.32px;line-height:6.32px;color:#141418;">NSVS 01286630</div>
<svg style="left:19px;top:318.35px" width="30" height="8" viewBox="0 0 30 8"><path d="M0.8 7 L3.8 4" stroke="#1a1a1a" stroke-width="1.2"/><path d="M2.8 3.6 L5 5.6 L5.8 2.4 L4.6 1.6Z" fill="#1a1a1a"/><circle cx="10" cy="4" r="2.6" fill="#e8e8e8" stroke="#606060" stroke-width="0.8"/><path d="M8.2 2.2 L11.8 5.8 M11.8 2.2 L8.2 5.8" stroke="#606060" stroke-width="0.7"/><circle cx="17" cy="4" r="1.5" fill="none" stroke="#606060" stroke-width="0.9"/><circle cx="25" cy="4" r="3" fill="#fff" stroke="#404040" stroke-width="0.8"/><path d="M25 2.2 V4.1 L26.3 4.8" stroke="#d08000" stroke-width="0.8" fill="none"/></svg>
<div class="t" style="left:50px;transform:scaleX(0.8696);transform-origin:0 0;top:320.88px;font-size:5.29px;line-height:5.29px;color:#7a7a7a;font-style:italic;">4:30 AM-6:45 AM</div>
<div style="left:0;top:326.20px;width:97px;height:13.55px;background:#efefef;"></div>
<div style="left:3px;top:329.70px;width:6.2px;height:6.2px;background:#fff;border:1px solid #6a6a6a;box-sizing:border-box;"></div>
<div style="left:11.3px;top:329.60px;width:1.9px;height:6.2px;background:#151515;"></div>
<div style="left:14.4px;top:329.60px;width:1.9px;height:6.2px;background:#151515;"></div>
<div class="t" style="left:19.5px;transform:scaleX(0.8696);transform-origin:0 0;top:326.90px;font-size:6.32px;line-height:6.32px;color:#141418;">SS CYG</div>
<svg style="left:19px;top:331.90px" width="30" height="8" viewBox="0 0 30 8"><path d="M0.8 7 L3.8 4" stroke="#1a1a1a" stroke-width="1.2"/><path d="M2.8 3.6 L5 5.6 L5.8 2.4 L4.6 1.6Z" fill="#1a1a1a"/><circle cx="10" cy="4" r="2.6" fill="#e8e8e8" stroke="#606060" stroke-width="0.8"/><path d="M8.2 2.2 L11.8 5.8 M11.8 2.2 L8.2 5.8" stroke="#606060" stroke-width="0.7"/><circle cx="17" cy="4" r="1.5" fill="none" stroke="#606060" stroke-width="0.9"/><circle cx="25" cy="4" r="3" fill="#fff" stroke="#404040" stroke-width="0.8"/><path d="M25 2.2 V4.1 L26.3 4.8" stroke="#d08000" stroke-width="0.8" fill="none"/></svg>
<div class="t" style="left:50px;transform:scaleX(0.8696);transform-origin:0 0;top:334.43px;font-size:5.29px;line-height:5.29px;color:#7a7a7a;font-style:italic;">7:00 PM-8:30 PM</div>
<div style="left:0;top:339.75px;width:97px;height:13.55px;background:#ffffff;"></div>
<div style="left:3px;top:343.25px;width:6.2px;height:6.2px;background:#fff;border:1px solid #6a6a6a;box-sizing:border-box;"></div>
<div style="left:11.3px;top:343.15px;width:1.9px;height:6.2px;background:#151515;"></div>
<div style="left:14.4px;top:343.15px;width:1.9px;height:6.2px;background:#151515;"></div>
<div class="t" style="left:19.5px;transform:scaleX(0.8696);transform-origin:0 0;top:340.45px;font-size:6.32px;line-height:6.32px;color:#141418;">HT CAS</div>
<svg style="left:19px;top:345.45px" width="30" height="8" viewBox="0 0 30 8"><path d="M0.8 7 L3.8 4" stroke="#1a1a1a" stroke-width="1.2"/><path d="M2.8 3.6 L5 5.6 L5.8 2.4 L4.6 1.6Z" fill="#1a1a1a"/><circle cx="10" cy="4" r="2.6" fill="#e8e8e8" stroke="#606060" stroke-width="0.8"/><path d="M8.2 2.2 L11.8 5.8 M11.8 2.2 L8.2 5.8" stroke="#606060" stroke-width="0.7"/><circle cx="17" cy="4" r="1.5" fill="none" stroke="#606060" stroke-width="0.9"/><circle cx="25" cy="4" r="3" fill="#fff" stroke="#404040" stroke-width="0.8"/><path d="M25 2.2 V4.1 L26.3 4.8" stroke="#d08000" stroke-width="0.8" fill="none"/></svg>
<div class="t" style="left:50px;transform:scaleX(0.8696);transform-origin:0 0;top:347.98px;font-size:5.29px;line-height:5.29px;color:#7a7a7a;font-style:italic;">12:00 AM-4:00 AM</div>
<div style="left:0;top:353.30px;width:97px;height:13.55px;background:#efefef;"></div>
<div style="left:3px;top:356.80px;width:6.2px;height:6.2px;background:#fff;border:1px solid #6a6a6a;box-sizing:border-box;"></div>
<div style="left:11.3px;top:356.70px;width:1.9px;height:6.2px;background:#151515;"></div>
<div style="left:14.4px;top:356.70px;width:1.9px;height:6.2px;background:#151515;"></div>
<div class="t" style="left:19.5px;transform:scaleX(0.8696);transform-origin:0 0;top:354.00px;font-size:6.32px;line-height:6.32px;color:#141418;">V1363 CYG</div>
<svg style="left:19px;top:359.00px" width="30" height="8" viewBox="0 0 30 8"><path d="M0.8 7 L3.8 4" stroke="#1a1a1a" stroke-width="1.2"/><path d="M2.8 3.6 L5 5.6 L5.8 2.4 L4.6 1.6Z" fill="#1a1a1a"/><circle cx="10" cy="4" r="2.6" fill="#e8e8e8" stroke="#606060" stroke-width="0.8"/><path d="M8.2 2.2 L11.8 5.8 M11.8 2.2 L8.2 5.8" stroke="#606060" stroke-width="0.7"/><circle cx="17" cy="4" r="1.5" fill="none" stroke="#606060" stroke-width="0.9"/><circle cx="25" cy="4" r="3" fill="#fff" stroke="#404040" stroke-width="0.8"/><path d="M25 2.2 V4.1 L26.3 4.8" stroke="#d08000" stroke-width="0.8" fill="none"/></svg>
<div class="t" style="left:50px;transform:scaleX(0.8696);transform-origin:0 0;top:361.53px;font-size:5.29px;line-height:5.29px;color:#7a7a7a;font-style:italic;">8:50 PM-9:00 PM</div>
<div style="left:0;top:366.85px;width:97px;height:13.55px;background:#ffffff;"></div>
<div style="left:3px;top:370.35px;width:6.2px;height:6.2px;background:#fff;border:1px solid #6a6a6a;box-sizing:border-box;"></div>
<div style="left:11.3px;top:370.25px;width:1.9px;height:6.2px;background:#151515;"></div>
<div style="left:14.4px;top:370.25px;width:1.9px;height:6.2px;background:#151515;"></div>
<div class="t" style="left:19.5px;transform:scaleX(0.8696);transform-origin:0 0;top:367.55px;font-size:6.32px;line-height:6.32px;color:#141418;">NSVS 14256825</div>
<svg style="left:19px;top:372.55px" width="30" height="8" viewBox="0 0 30 8"><path d="M0.8 7 L3.8 4" stroke="#1a1a1a" stroke-width="1.2"/><path d="M2.8 3.6 L5 5.6 L5.8 2.4 L4.6 1.6Z" fill="#1a1a1a"/><circle cx="10" cy="4" r="2.6" fill="#e8e8e8" stroke="#606060" stroke-width="0.8"/><path d="M8.2 2.2 L11.8 5.8 M11.8 2.2 L8.2 5.8" stroke="#606060" stroke-width="0.7"/><circle cx="17" cy="4" r="1.5" fill="none" stroke="#606060" stroke-width="0.9"/><circle cx="25" cy="4" r="3" fill="#fff" stroke="#404040" stroke-width="0.8"/><path d="M25 2.2 V4.1 L26.3 4.8" stroke="#d08000" stroke-width="0.8" fill="none"/></svg>
</div>
<div style="left:138px;top:28px;width:8.5px;height:374px;background:#d0d0d0;border-left:1px solid #9a9a9a;border-right:1px solid #505050;box-sizing:border-box;"></div>
<div style="left:139px;top:36px;width:1px;height:358px;background:#ececec;"></div>
<div style="left:138px;top:35.5px;width:8.5px;height:209.5px;background:#e6e6e6;border:1px solid #404040;border-left-color:#a0a0a0;border-top:none;box-sizing:border-box;"></div>
<div style="left:139px;top:35.5px;width:1px;height:208px;background:#fafafa;"></div>
<div style="left:138px;top:28px;width:8.5px;height:8px;background:#f4f4f4;border:1px solid #404040;border-bottom-width:1.3px;box-sizing:border-box;"></div>
<svg style="left:138.5px;top:29px;" width="7" height="6" viewBox="0 0 7 6"><path d="M1.7 3.8 L3.5 2.2 L5.3 3.8" fill="none" stroke="#606060" stroke-width="0.8"/></svg>
<div style="left:138px;top:394.5px;width:8.5px;height:7.5px;background:#f4f4f4;border:1px solid #404040;box-sizing:border-box;"></div>
<svg style="left:138.5px;top:395px;" width="7" height="6" viewBox="0 0 7 6"><path d="M1.7 2.2 L3.5 3.8 L5.3 2.2" fill="none" stroke="#606060" stroke-width="0.8"/></svg>
<div style="left:46.5px;top:407px;width:13px;height:12.5px;background:#ececec;border:1px solid #505050;border-radius:1px;box-sizing:border-box;"></div>
<div style="left:60.5px;top:407px;width:13px;height:12.5px;background:#ececec;border:1px solid #505050;border-radius:1px;box-sizing:border-box;"></div>
<div style="left:75.5px;top:407px;width:10px;height:12.5px;background:#ececec;border:1px solid #505050;border-radius:1px;box-sizing:border-box;"></div>
<div style="left:86px;top:407px;width:10.5px;height:12.5px;background:#ececec;border:1px solid #505050;border-radius:1px;box-sizing:border-box;"></div>
<div style="left:97px;top:407px;width:10.5px;height:12.5px;background:#ececec;border:1px solid #505050;border-radius:1px;box-sizing:border-box;"></div>
<div style="left:108.5px;top:407px;width:13px;height:12.5px;background:#ececec;border:1px solid #505050;border-radius:1px;box-sizing:border-box;"></div>
<div style="left:123.5px;top:407px;width:14px;height:12.5px;background:#ececec;border:1px solid #505050;border-radius:1px;box-sizing:border-box;"></div>
<svg style="left:46.5px;top:407px;" width="13" height="12.5" viewBox="0 0 13 12.5"><path d="M6.5 3 V9.5 M3.2 6.25 H9.8" stroke="#101010" stroke-width="1.6"/></svg>
<svg style="left:60.5px;top:407px;" width="13" height="12.5" viewBox="0 0 13 12.5"><path d="M4 3.7 L9 8.7 M9 3.7 L4 8.7" stroke="#101010" stroke-width="1.6"/></svg>
<svg style="left:75.5px;top:407px;" width="10" height="12.5" viewBox="0 0 10 12.5"><rect x="3" y="3" width="4" height="6.5" fill="none" stroke="#c08020" stroke-width="0.7"/><path d="M4 5 H6 M4 6.5 H6 M4 8 H6" stroke="#404040" stroke-width="0.5"/></svg>
<svg style="left:86px;top:407px;" width="10.5" height="12.5" viewBox="0 0 10.5 12.5"><path d="M5.25 3 V10 M2.8 5.5 L5.25 3 L7.7 5.5" fill="none" stroke="#101010" stroke-width="1.3"/></svg>
<svg style="left:97px;top:407px;" width="10.5" height="12.5" viewBox="0 0 10.5 12.5"><path d="M5.25 2.5 V9.5 M2.8 7 L5.25 9.5 L7.7 7" fill="none" stroke="#101010" stroke-width="1.3"/></svg>
<svg style="left:108.5px;top:407px;" width="13" height="12.5" viewBox="0 0 13 12.5"><circle cx="6.5" cy="6.25" r="3.6" fill="#fff" stroke="#303030" stroke-width="0.8"/><path d="M6.5 4 V6.4 L8 7.3" fill="none" stroke="#d08000" stroke-width="0.8"/></svg>
<svg style="left:123.5px;top:407px;" width="14" height="12.5" viewBox="0 0 14 12.5"><path d="M3 7 L6 5.5" stroke="#d08000" stroke-width="1.4"/><path d="M6.5 6.3 H11" stroke="#202020" stroke-width="1.4"/></svg>
<div style="left:148.5px;top:28px;width:202.5px;height:68px;background:#d9d9d9;border-top:1px solid #4a4a4a;box-sizing:border-box;"></div>
<div style="left:353.5px;top:28px;width:202.5px;height:68px;background:#d9d9d9;border-top:1px solid #4a4a4a;box-sizing:border-box;"></div>
<div style="left:149px;top:99px;width:202px;height:42px;background:#d9d9d9;border-top:1px solid #4a4a4a;box-sizing:border-box;"></div>
<div style="left:353.5px;top:99px;width:202.5px;height:42px;background:#d9d9d9;border-top:1px solid #4a4a4a;box-sizing:border-box;"></div>
<div class="t" style="left:153.3px;transform:scaleX(0.8696);transform-origin:0 0;top:30.33px;font-size:6.67px;line-height:6.67px;color:#000000;font-weight:bold;-webkit-text-stroke:0.15px currentColor;">Sequence Data</div>
<svg style="left:153px;top:40.2px;" width="7" height="7" viewBox="0 0 7 7"><path d="M0.6 0.4 L6.4 3.3 L0.6 6.2Z" fill="#202020"/></svg>
<div class="t" style="left:161.8px;transform:scaleX(0.8696);transform-origin:0 0;top:41.06px;font-size:6.21px;line-height:6.21px;color:#141414;">Running:</div>
<div class="t" style="left:193.6px;transform:scaleX(0.8696);transform-origin:0 0;top:41.06px;font-size:6.21px;line-height:6.21px;color:#141414;">None</div>
<svg style="left:152.3px;top:51.8px;" width="8" height="7" viewBox="0 0 8 7"><path d="M0.5 1 H3.2 L4 1.8 H7 V6.5 H0.5Z" fill="#282828"/><path d="M1 3 H6.5 M1 4.3 H6.5" stroke="#c8c8c8" stroke-width="0.5"/></svg>
<div class="t" style="left:161.8px;transform:scaleX(0.8696);transform-origin:0 0;top:53.46px;font-size:6.21px;line-height:6.21px;color:#141414;">Directory:</div>
<svg style="left:152.8px;top:64.6px;" width="7" height="7" viewBox="0 0 7 7"><circle cx="1.7" cy="1.7" r="1.1" fill="none" stroke="#202020" stroke-width="0.9"/><circle cx="5.3" cy="5.3" r="1.1" fill="none" stroke="#202020" stroke-width="0.9"/><path d="M5.8 0.6 L1.2 6.4" stroke="#202020" stroke-width="0.9"/></svg>
<div class="t" style="left:161.8px;transform:scaleX(0.8696);transform-origin:0 0;top:66.26px;font-size:6.21px;line-height:6.21px;color:#141414;">File Name:</div>
<svg style="left:152.3px;top:77px;" width="8" height="8" viewBox="0 0 8 8"><path d="M4.6 1.2 A3 3 0 1 1 5.2 7.2" fill="none" stroke="#d08a10" stroke-width="1.5"/><circle cx="3.4" cy="4" r="1.6" fill="#202020"/><path d="M0.6 7.8 Q3.4 4.8 6.2 7.8Z" fill="#202020"/></svg>
<div class="t" style="left:161.8px;transform:scaleX(0.8696);transform-origin:0 0;top:78.76px;font-size:6.21px;line-height:6.21px;color:#141414;">User Profile:</div>
<div style="left:193px;top:51.2px;width:137px;height:10.5px;background:#f2f2f2;border:1px solid #585858;border-radius:1px;box-sizing:border-box;"></div>
<div class="t" style="left:195.5px;transform:scaleX(0.8696);transform-origin:0 0;top:53.62px;font-size:6.09px;line-height:6.09px;color:#141414;">C:\Data\SGP\Images</div>
<div style="left:331.9px;top:51.4px;width:15.8px;height:10.2px;background:#ececec;border:1px solid #505050;border-radius:1px;box-sizing:border-box;"></div>
<svg style="left:334px;top:52.5px;" width="12" height="8" viewBox="0 0 12 8"><path d="M3 2 H5.5 L6.2 2.8 H9 V6.8 H3Z" fill="#303030"/><path d="M3.5 6.8 L4.6 4 H10 L9 6.8Z" fill="#d8d8d8" stroke="#303030" stroke-width="0.5"/></svg>
<div style="left:193px;top:64.4px;width:119.2px;height:9.8px;background:#f2f2f2;border:1px solid #585858;border-radius:1px;box-sizing:border-box;"></div>
<div class="t" style="left:195.5px;transform:scaleX(0.8696);transform-origin:0 0;top:67.30px;font-size:5.75px;line-height:5.75px;color:#141414;">%ft\%tn\%tn_%el_%bi_%su_%dt_%tm_%04</div>
<div style="left:314.3px;top:64.4px;width:15.7px;height:9.8px;background:#ececec;border:1px solid #505050;border-radius:1px;box-sizing:border-box;"></div>
<svg style="left:316px;top:65px;" width="12" height="9" viewBox="0 0 12 9"><circle cx="7.8" cy="3" r="1.7" fill="none" stroke="#c07000" stroke-width="1"/><path d="M6.6 4.2 L3.4 7.4 M4.4 6.4 L5.4 7.4" stroke="#303030" stroke-width="0.9"/></svg>
<div style="left:331.9px;top:64.4px;width:15.8px;height:9.8px;background:#ececec;border:1px solid #505050;border-radius:1px;box-sizing:border-box;"></div>
<svg style="left:334px;top:65px;" width="12" height="9" viewBox="0 0 12 9"><rect x="3" y="3.2" width="6" height="2.8" fill="#c08020"/><path d="M3.6 4.6 H8.4" stroke="#404040" stroke-width="0.5"/></svg>
<div style="left:193px;top:76.7px;width:154.6px;height:10px;background:#f2f2f2;border:1px solid #585858;border-radius:1px;box-sizing:border-box;"></div>
<div class="t" style="left:195.5px;transform:scaleX(0.8696);transform-origin:0 0;top:78.92px;font-size:6.09px;line-height:6.09px;color:#141414;">astro-sharp</div>
<div style="left:338.5px;top:77.6px;width:8.2px;height:8.2px;background:#e8e8e8;border-left:0.6px solid #b0b0b0;box-sizing:border-box;"></div>
<svg style="left:339px;top:78px;" width="8" height="8" viewBox="0 0 8 8"><path d="M2 3 H6 L4 5.2Z" fill="#101010"/></svg>
<div class="t" style="left:357.5px;transform:scaleX(0.8696);transform-origin:0 0;top:30.15px;font-size:6.44px;line-height:6.44px;color:#000000;font-weight:bold;-webkit-text-stroke:0.15px currentColor;">Equipment</div>
<div class="t" style="left:367.8px;transform:scaleX(0.8696);transform-origin:0 0;top:41.16px;font-size:6.21px;line-height:6.21px;color:#141414;">Camera:</div>
<div style="left:401.4px;top:39.0px;width:124px;height:9.6px;background:#f2f2f2;border:1px solid #585858;border-radius:1px;box-sizing:border-box;"></div>
<div class="t" style="left:404px;transform:scaleX(0.8696);transform-origin:0 0;top:41.12px;font-size:6.09px;line-height:6.09px;color:#141414;">Moravian USB Camera 1 (64 bit)</div>
<div style="left:516.5px;top:39.8px;width:8.2px;height:8.2px;background:#e4e4e4;border-left:0.6px solid #b0b0b0;box-sizing:border-box;"></div>
<svg style="left:516.8px;top:39.9px;" width="8" height="8" viewBox="0 0 8 8"><path d="M2 3 H6 L4 5.2Z" fill="#101010"/></svg>
<div style="left:528.4px;top:38.199999999999996px;width:10.8px;height:10.6px;background:#ececec;border:1px solid #505050;border-radius:1px;box-sizing:border-box;background:#fafafa;"></div>
<svg style="left:528.4px;top:38.199999999999996px;" width="10.8" height="10.6" viewBox="0 0 10.8 10.6"><path d="M3.4 3.4 L7.6 7.6" stroke="#202020" stroke-width="1.3"/><path d="M7.4 3.2 L3.2 7.4" stroke="#202020" stroke-width="1.1"/><circle cx="3" cy="3" r="1.3" fill="#202020"/><circle cx="7.8" cy="7.8" r="1.1" fill="#202020"/><path d="M6.8 2.2 L8.6 4" stroke="#202020" stroke-width="1.6"/><path d="M2.4 8.2 L3.8 6.8" stroke="#202020" stroke-width="1.5"/></svg>
<div style="left:540px;top:38.199999999999996px;width:11.2px;height:10.6px;background:#ececec;border:1px solid #505050;border-radius:1px;box-sizing:border-box;background:#fafafa;"></div>
<svg style="left:540px;top:38.199999999999996px;" width="11.2" height="10.6" viewBox="0 0 11.2 10.6"><circle cx="5.6" cy="5.3" r="3" fill="none" stroke="#202020" stroke-width="1.1"/><path d="M5.6 3.6 V6.6" stroke="#202020" stroke-width="1.2"/></svg>
<div class="t" style="left:367.8px;transform:scaleX(0.8696);transform-origin:0 0;top:53.26px;font-size:6.21px;line-height:6.21px;color:#141414;">Filter Wheel:</div>
<div style="left:401.4px;top:51.1px;width:124px;height:9.6px;background:#f2f2f2;border:1px solid #585858;border-radius:1px;box-sizing:border-box;"></div>
<div class="t" style="left:404px;transform:scaleX(0.8696);transform-origin:0 0;top:53.22px;font-size:6.09px;line-height:6.09px;color:#141414;">Moravian USB Filter Wheel 1 (64 bit)</div>
<div style="left:516.5px;top:51.9px;width:8.2px;height:8.2px;background:#e4e4e4;border-left:0.6px solid #b0b0b0;box-sizing:border-box;"></div>
<svg style="left:516.8px;top:52.0px;" width="8" height="8" viewBox="0 0 8 8"><path d="M2 3 H6 L4 5.2Z" fill="#101010"/></svg>
<div style="left:528.4px;top:50.3px;width:10.8px;height:10.6px;background:#ececec;border:1px solid #505050;border-radius:1px;box-sizing:border-box;background:#fafafa;"></div>
<svg style="left:528.4px;top:50.3px;" width="10.8" height="10.6" viewBox="0 0 10.8 10.6"><path d="M3.4 3.4 L7.6 7.6" stroke="#202020" stroke-width="1.3"/><path d="M7.4 3.2 L3.2 7.4" stroke="#202020" stroke-width="1.1"/><circle cx="3" cy="3" r="1.3" fill="#202020"/><circle cx="7.8" cy="7.8" r="1.1" fill="#202020"/><path d="M6.8 2.2 L8.6 4" stroke="#202020" stroke-width="1.6"/><path d="M2.4 8.2 L3.8 6.8" stroke="#202020" stroke-width="1.5"/></svg>
<div style="left:540px;top:50.3px;width:11.2px;height:10.6px;background:#ececec;border:1px solid #505050;border-radius:1px;box-sizing:border-box;background:#fafafa;"></div>
<svg style="left:540px;top:50.3px;" width="11.2" height="10.6" viewBox="0 0 11.2 10.6"><circle cx="5.6" cy="5.3" r="3" fill="none" stroke="#202020" stroke-width="1.1"/><path d="M5.6 3.6 V6.6" stroke="#202020" stroke-width="1.2"/></svg>
<div class="t" style="left:367.8px;transform:scaleX(0.8696);transform-origin:0 0;top:66.06px;font-size:6.21px;line-height:6.21px;color:#141414;">Focuser:</div>
<div style="left:401.4px;top:63.9px;width:124px;height:9.6px;background:#f2f2f2;border:1px solid #585858;border-radius:1px;box-sizing:border-box;"></div>
<div class="t" style="left:404px;transform:scaleX(0.8696);transform-origin:0 0;top:66.02px;font-size:6.09px;line-height:6.09px;color:#141414;">PegasusAstro Focuser 1</div>
<div style="left:516.5px;top:64.7px;width:8.2px;height:8.2px;background:#e4e4e4;border-left:0.6px solid #b0b0b0;box-sizing:border-box;"></div>
<svg style="left:516.8px;top:64.8px;" width="8" height="8" viewBox="0 0 8 8"><path d="M2 3 H6 L4 5.2Z" fill="#101010"/></svg>
<div style="left:528.4px;top:63.099999999999994px;width:10.8px;height:10.6px;background:#ececec;border:1px solid #505050;border-radius:1px;box-sizing:border-box;background:#fafafa;"></div>
<svg style="left:528.4px;top:63.099999999999994px;" width="10.8" height="10.6" viewBox="0 0 10.8 10.6"><path d="M3.4 3.4 L7.6 7.6" stroke="#202020" stroke-width="1.3"/><path d="M7.4 3.2 L3.2 7.4" stroke="#202020" stroke-width="1.1"/><circle cx="3" cy="3" r="1.3" fill="#202020"/><circle cx="7.8" cy="7.8" r="1.1" fill="#202020"/><path d="M6.8 2.2 L8.6 4" stroke="#202020" stroke-width="1.6"/><path d="M2.4 8.2 L3.8 6.8" stroke="#d08a10" stroke-width="1.5"/></svg>
<div style="left:540px;top:63.099999999999994px;width:11.2px;height:10.6px;background:#8a0a0a;border:1px solid #3c3c3c;border-radius:1px;box-sizing:border-box;"></div>
<svg style="left:540px;top:63.099999999999994px;" width="11.2" height="10.6" viewBox="0 0 11.2 10.6"><path d="M3.9 3.4 A2.9 2.9 0 1 0 7.3 3.4" fill="none" stroke="#ffd0c8" stroke-width="1.1"/><path d="M5.6 2 V5.2" stroke="#ffd0c8" stroke-width="1.1"/></svg>
<div class="t" style="left:367.8px;transform:scaleX(0.8696);transform-origin:0 0;top:78.96px;font-size:6.21px;line-height:6.21px;color:#141414;">Telescope:</div>
<div style="left:401.4px;top:76.8px;width:124px;height:9.6px;background:#f2f2f2;border:1px solid #585858;border-radius:1px;box-sizing:border-box;"></div>
<div class="t" style="left:404px;transform:scaleX(0.8696);transform-origin:0 0;top:78.92px;font-size:6.09px;line-height:6.09px;color:#141414;">10Micron Mount</div>
<div style="left:516.5px;top:77.60000000000001px;width:8.2px;height:8.2px;background:#e4e4e4;border-left:0.6px solid #b0b0b0;box-sizing:border-box;"></div>
<svg style="left:516.8px;top:77.7px;" width="8" height="8" viewBox="0 0 8 8"><path d="M2 3 H6 L4 5.2Z" fill="#101010"/></svg>
<div style="left:528.4px;top:76.0px;width:10.8px;height:10.6px;background:#ececec;border:1px solid #505050;border-radius:1px;box-sizing:border-box;background:#fafafa;"></div>
<svg style="left:528.4px;top:76.0px;" width="10.8" height="10.6" viewBox="0 0 10.8 10.6"><path d="M3.4 3.4 L7.6 7.6" stroke="#202020" stroke-width="1.3"/><path d="M7.4 3.2 L3.2 7.4" stroke="#202020" stroke-width="1.1"/><circle cx="3" cy="3" r="1.3" fill="#202020"/><circle cx="7.8" cy="7.8" r="1.1" fill="#202020"/><path d="M6.8 2.2 L8.6 4" stroke="#202020" stroke-width="1.6"/><path d="M2.4 8.2 L3.8 6.8" stroke="#202020" stroke-width="1.5"/></svg>
<div style="left:540px;top:76.0px;width:11.2px;height:10.6px;background:#ececec;border:1px solid #505050;border-radius:1px;box-sizing:border-box;background:#fafafa;"></div>
<svg style="left:540px;top:76.0px;" width="11.2" height="10.6" viewBox="0 0 11.2 10.6"><circle cx="5.6" cy="5.3" r="3" fill="none" stroke="#202020" stroke-width="1.1"/><path d="M5.6 3.6 V6.6" stroke="#202020" stroke-width="1.2"/></svg>
<svg style="left:357.5px;top:40px;" width="8" height="8" viewBox="0 0 8 8"><rect x="0.8" y="2" width="6.6" height="5" fill="#f8f8f8" stroke="#202020" stroke-width="1"/><circle cx="4.1" cy="4.5" r="1.5" fill="#c88000"/><rect x="2.2" y="0.8" width="2.6" height="1.4" fill="#202020"/></svg>
<svg style="left:357.3px;top:51.3px;" width="8" height="8" viewBox="0 0 8 8"><circle cx="4" cy="4" r="3.3" fill="#b87808" stroke="#4a3a20" stroke-width="0.7"/></svg>
<svg style="left:357.5px;top:64.8px;" width="8" height="8" viewBox="0 0 8 8"><circle cx="3" cy="5" r="2" fill="none" stroke="#202020" stroke-width="1.1"/><circle cx="6" cy="2" r="1.4" fill="#d08a10"/></svg>
<svg style="left:357.5px;top:77.7px;" width="8" height="8" viewBox="0 0 8 8"><path d="M0.8 7.2 L4.5 3.5" stroke="#202020" stroke-width="1.2"/><circle cx="5.6" cy="2.4" r="1.8" fill="#202020"/></svg>
<div style="left:435.4px;top:89.2px;width:37px;height:4.8px;background:#ececec;border:1px solid #505050;border-radius:1px;box-sizing:border-box;background:#fafafa;border-radius:0;"></div>
<svg style="left:450px;top:89.6px;" width="7" height="4" viewBox="0 0 7 4"><path d="M2 0.8 H5 L3.5 2.8Z" fill="#101010"/></svg>
<div class="t" style="left:153.5px;transform:scaleX(0.8696);transform-origin:0 0;top:101.43px;font-size:6.67px;line-height:6.67px;color:#000000;font-weight:bold;-webkit-text-stroke:0.15px currentColor;">RR LEO</div>
<svg style="left:152px;top:111.7px;" width="8" height="4" viewBox="0 0 8 4"><rect x="0.5" y="0.6" width="7" height="2.8" rx="1" fill="#c9a060" stroke="#505050" stroke-width="0.6"/></svg>
<div class="t" style="left:160px;transform:scaleX(0.8696);transform-origin:0 0;top:111.05px;font-size:6.44px;line-height:6.44px;color:#141414;">Total events complete: 0/1</div>
<svg style="left:152px;top:120.5px;" width="8" height="4" viewBox="0 0 8 4"><rect x="0.5" y="0.6" width="7" height="2.8" rx="1" fill="#c9a060" stroke="#505050" stroke-width="0.6"/></svg>
<div class="t" style="left:160px;transform:scaleX(0.8696);transform-origin:0 0;top:119.85px;font-size:6.44px;line-height:6.44px;color:#141414;">Total frames complete: 0/600</div>
<svg style="left:250.5px;top:109.5px;" width="8.5" height="8.5" viewBox="0 0 8.5 8.5"><circle cx="4.25" cy="4.25" r="3.6" fill="#f8f8f8" stroke="#404040" stroke-width="0.7"/><path d="M4.25 2 V6.5" stroke="#d08a10" stroke-width="1"/></svg>
<div class="t" style="left:260.2px;transform:scaleX(0.8696);transform-origin:0 0;top:110.90px;font-size:6.04px;line-height:6.04px;color:#141414;">Remaining time (this target): 07:30:00</div>
<div style="left:152px;top:127.7px;width:196px;height:9.8px;background:#f0f0f0;border:0.9px solid #3c3c3c;border-radius:1px;box-sizing:border-box;"></div>
<div class="t" style="left:229.60px;width:40px;text-align:center;transform:scaleX(0.8696);transform-origin:50% 0;top:130.03px;font-size:6.67px;line-height:6.67px;color:#141414;">0%</div>
<div class="t" style="left:357.5px;transform:scaleX(0.8696);transform-origin:0 0;top:101.55px;font-size:6.44px;line-height:6.44px;color:#000000;font-weight:bold;-webkit-text-stroke:0.15px currentColor;">Delay and Ordering Options (per Target)</div>
<div class="t" style="left:357.5px;transform:scaleX(0.8696);transform-origin:0 0;top:110.26px;font-size:6.21px;line-height:6.21px;color:#141414;">Delay:</div>
<svg style="left:357.5px;top:119.15px;" width="7.5" height="7.5" viewBox="0 0 7.5 7.5"><circle cx="3.6" cy="4.2" r="2.8" fill="#fafafa" stroke="#202020" stroke-width="0.8"/><path d="M3.6 4.2 L4.8 3" stroke="#d08a10" stroke-width="1"/><path d="M2.8 0.8 H4.4" stroke="#202020" stroke-width="0.8"/></svg>
<div class="t" style="left:366.8px;transform:scaleX(0.8696);transform-origin:0 0;top:120.01px;font-size:6.21px;line-height:6.21px;color:#141414;">Delay first:</div>
<div style="left:405.2px;top:117.85px;width:21.3px;height:9.8px;background:#ffffff;border:1px solid #585858;border-radius:1px;box-sizing:border-box;"></div>
<div style="left:417.3px;top:118.64999999999999px;width:8.4px;height:4.1000000000000005px;background:#e6e6e6;border:0.8px solid #707070;box-sizing:border-box;"></div>
<div style="left:417.3px;top:122.75px;width:8.4px;height:4.1000000000000005px;background:#e6e6e6;border:0.8px solid #707070;box-sizing:border-box;"></div>
<svg style="left:417.3px;top:117.85px;" width="8.4" height="9.8" viewBox="0 0 8.4 9.8"><path d="M2.3 3.80 L4.2 1.80 L6.1 3.80Z M2.3 6.00 L4.2 8.00 L6.1 6.00Z" fill="#202020"/></svg>
<div class="t" style="left:407.2px;transform:scaleX(0.8696);transform-origin:0 0;top:119.97px;font-size:6.09px;line-height:6.09px;color:#303030;">0</div>
<div class="t" style="left:431px;transform:scaleX(0.8696);transform-origin:0 0;top:120.01px;font-size:6.21px;line-height:6.21px;color:#141414;">seconds</div>
<svg style="left:357.5px;top:128.9px;" width="7.5" height="7.5" viewBox="0 0 7.5 7.5"><circle cx="3.6" cy="4.2" r="2.8" fill="#fafafa" stroke="#202020" stroke-width="0.8"/><path d="M3.6 4.2 L4.8 3" stroke="#d08a10" stroke-width="1"/><path d="M2.8 0.8 H4.4" stroke="#202020" stroke-width="0.8"/></svg>
<div class="t" style="left:366.8px;transform:scaleX(0.8696);transform-origin:0 0;top:129.76px;font-size:6.21px;line-height:6.21px;color:#141414;">Delay between:</div>
<div style="left:405.2px;top:127.6px;width:21.3px;height:9.8px;background:#ffffff;border:1px solid #585858;border-radius:1px;box-sizing:border-box;"></div>
<div style="left:417.3px;top:128.4px;width:8.4px;height:4.1000000000000005px;background:#e6e6e6;border:0.8px solid #707070;box-sizing:border-box;"></div>
<div style="left:417.3px;top:132.5px;width:8.4px;height:4.1000000000000005px;background:#e6e6e6;border:0.8px solid #707070;box-sizing:border-box;"></div>
<svg style="left:417.3px;top:127.6px;" width="8.4" height="9.8" viewBox="0 0 8.4 9.8"><path d="M2.3 3.80 L4.2 1.80 L6.1 3.80Z M2.3 6.00 L4.2 8.00 L6.1 6.00Z" fill="#202020"/></svg>
<div class="t" style="left:407.2px;transform:scaleX(0.8696);transform-origin:0 0;top:129.72px;font-size:6.09px;line-height:6.09px;color:#303030;">0</div>
<div class="t" style="left:431px;transform:scaleX(0.8696);transform-origin:0 0;top:129.76px;font-size:6.21px;line-height:6.21px;color:#141414;">seconds</div>
<div class="t" style="left:473.3px;transform:scaleX(0.8696);transform-origin:0 0;top:109.96px;font-size:6.21px;line-height:6.21px;color:#141414;">Event order:</div>
<svg style="left:472.8px;top:119.5px;" width="8" height="6.5" viewBox="0 0 8 6.5"><path d="M7 1.3 H3 Q1 1.3 1 3.2 Q1 5 3 5 H7" fill="none" stroke="#d08a10" stroke-width="1"/><path d="M3.5 0 L1.5 1.3 L3.5 2.7" fill="none" stroke="#202020" stroke-width="0.9"/></svg>
<svg style="left:483px;top:119.6px;" width="7" height="7" viewBox="0 0 7 7"><circle cx="3.3" cy="3.3" r="2.8" fill="#fafafa" stroke="#303030" stroke-width="0.7"/></svg>
<div class="t" style="left:492.5px;transform:scaleX(0.8696);transform-origin:0 0;top:119.97px;font-size:6.09px;line-height:6.09px;color:#141414;">Rotate through events</div>
<svg style="left:472.8px;top:129.5px;" width="8" height="6" viewBox="0 0 8 6"><path d="M0.8 3 H6.5 M4.3 0.8 L6.7 3 L4.3 5.2" fill="none" stroke="#202020" stroke-width="1.1"/></svg>
<svg style="left:483px;top:129.2px;" width="7" height="7" viewBox="0 0 7 7"><circle cx="3.3" cy="3.3" r="2.8" fill="#fafafa" stroke="#303030" stroke-width="0.7"/><circle cx="3.3" cy="3.3" r="0.9" fill="#c03000"/></svg>
<div class="t" style="left:492.5px;transform:scaleX(0.8696);transform-origin:0 0;top:130.66px;font-size:5.92px;line-height:5.92px;color:#141414;">Finish entire events first</div>
<div style="left:149.5px;top:143px;width:405.5px;height:259px;background:#d8d8d8;border-top:1px solid #4a4a4a;border-left:1px solid #b4b4b4;box-sizing:border-box;"></div>
<div style="left:187.2px;top:159px;width:0.8px;height:243px;background:#c6c6c6;"></div>
<div style="left:228.0px;top:159px;width:0.8px;height:243px;background:#c6c6c6;"></div>
<div style="left:246.2px;top:159px;width:0.8px;height:243px;background:#c6c6c6;"></div>
<div style="left:277.4px;top:159px;width:0.8px;height:243px;background:#c6c6c6;"></div>
<div style="left:310.6px;top:159px;width:0.8px;height:243px;background:#c6c6c6;"></div>
<div style="left:353px;top:159px;width:0.8px;height:243px;background:#c6c6c6;"></div>
<div style="left:386.4px;top:159px;width:0.8px;height:243px;background:#c6c6c6;"></div>
<div style="left:416px;top:159px;width:0.8px;height:243px;background:#c6c6c6;"></div>
<div style="left:445.6px;top:159px;width:0.8px;height:243px;background:#c6c6c6;"></div>
<svg style="left:152.5px;top:146.5px;" width="4.5" height="9" viewBox="0 0 4.5 9"><rect x="0.4" y="0.4" width="3.6" height="8" rx="1" fill="#f0f0f0" stroke="#606060" stroke-width="0.6"/><rect x="1.2" y="5" width="2" height="2" fill="#e0c000"/></svg>
<div class="t" style="left:160px;transform:scaleX(0.8696);transform-origin:0 0;top:148.55px;font-size:6.44px;line-height:6.44px;color:#000000;font-weight:bold;-webkit-text-stroke:0.15px currentColor;">Event</div>
<div style="left:190.2px;top:148px;width:1.5px;height:6.5px;background:#151515;"></div>
<div style="left:193.2px;top:148px;width:1.5px;height:6.5px;background:#151515;"></div>
<svg style="left:199px;top:147.3px;" width="7" height="8" viewBox="0 0 7 8"><path d="M0.8 7.2 L4 4" stroke="#202020" stroke-width="1.2"/><circle cx="5" cy="2.8" r="1.8" fill="#202020"/></svg>
<svg style="left:209.8px;top:147px;" width="6" height="8.5" viewBox="0 0 6 8.5"><rect x="0.4" y="0.4" width="5.2" height="7.7" fill="#f6e8c8" stroke="#c08020" stroke-width="0.6"/><path d="M2 2.5 Q4 2 3.8 3.6 L2.2 6 H4" fill="none" stroke="#404040" stroke-width="0.6"/></svg>
<svg style="left:219px;top:147.5px;" width="8" height="7" viewBox="0 0 8 7"><ellipse cx="4" cy="3.2" rx="3.4" ry="2.6" fill="#f8f8f8" stroke="#707070" stroke-width="0.6"/><circle cx="3.4" cy="3" r="1.3" fill="#d8a040"/><path d="M3 5.5 L2 6.8 L4.5 5.6" fill="#707070"/></svg>
<div class="t" style="left:231.7px;transform:scaleX(0.8696);transform-origin:0 0;top:148.55px;font-size:6.44px;line-height:6.44px;color:#000000;font-weight:bold;-webkit-text-stroke:0.15px currentColor;">Run</div>
<div class="t" style="left:255.5px;transform:scaleX(0.8696);transform-origin:0 0;top:148.55px;font-size:6.44px;line-height:6.44px;color:#000000;font-weight:bold;-webkit-text-stroke:0.15px currentColor;">Type</div>
<div class="t" style="left:287px;transform:scaleX(0.8696);transform-origin:0 0;top:148.55px;font-size:6.44px;line-height:6.44px;color:#000000;font-weight:bold;-webkit-text-stroke:0.15px currentColor;">Filter</div>
<div class="t" style="left:323.7px;transform:scaleX(0.8696);transform-origin:0 0;top:148.55px;font-size:6.44px;line-height:6.44px;color:#000000;font-weight:bold;-webkit-text-stroke:0.15px currentColor;">Suffix</div>
<div class="t" style="left:356px;transform:scaleX(0.8696);transform-origin:0 0;top:148.55px;font-size:6.44px;line-height:6.44px;color:#000000;font-weight:bold;-webkit-text-stroke:0.15px currentColor;">Exposure</div>
<div class="t" style="left:396px;transform:scaleX(0.8696);transform-origin:0 0;top:148.55px;font-size:6.44px;line-height:6.44px;color:#000000;font-weight:bold;-webkit-text-stroke:0.15px currentColor;">Bin</div>
<div class="t" style="left:420.7px;transform:scaleX(0.8696);transform-origin:0 0;top:148.55px;font-size:6.44px;line-height:6.44px;color:#000000;font-weight:bold;-webkit-text-stroke:0.15px currentColor;">Repeat</div>
<div class="t" style="left:487.7px;transform:scaleX(0.8696);transform-origin:0 0;top:148.55px;font-size:6.44px;line-height:6.44px;color:#000000;font-weight:bold;-webkit-text-stroke:0.15px currentColor;">Progress</div>
<div style="left:150.3px;top:158.0px;width:404.7px;height:0.7px;background:#c9c9c9;"></div>
<svg style="left:151.5px;top:163.20000000000002px;" width="7" height="7" viewBox="0 0 7 7"><path d="M1.2 1.2 L5.8 5.8 M5.8 1.2 L1.2 5.8" stroke="#151515" stroke-width="1.9"/></svg>
<svg style="left:160px;top:162.8px;" width="7.5" height="7.5" viewBox="0 0 7.5 7.5"><circle cx="3.75" cy="3.75" r="2.4" fill="none" stroke="#151515" stroke-width="1.5"/><rect x="3.05" y="0.2" width="1.4" height="1.6" fill="#151515" transform="rotate(0 3.75 3.75)"/><rect x="3.05" y="0.2" width="1.4" height="1.6" fill="#151515" transform="rotate(45 3.75 3.75)"/><rect x="3.05" y="0.2" width="1.4" height="1.6" fill="#151515" transform="rotate(90 3.75 3.75)"/><rect x="3.05" y="0.2" width="1.4" height="1.6" fill="#151515" transform="rotate(135 3.75 3.75)"/><rect x="3.05" y="0.2" width="1.4" height="1.6" fill="#151515" transform="rotate(180 3.75 3.75)"/><rect x="3.05" y="0.2" width="1.4" height="1.6" fill="#151515" transform="rotate(225 3.75 3.75)"/><rect x="3.05" y="0.2" width="1.4" height="1.6" fill="#151515" transform="rotate(270 3.75 3.75)"/><rect x="3.05" y="0.2" width="1.4" height="1.6" fill="#151515" transform="rotate(315 3.75 3.75)"/></svg>
<svg style="left:169px;top:160.3px;" width="5.5" height="11" viewBox="0 0 5.5 11"><path d="M2.75 0.5 L5.1 2.9 H3.8 V4.7 H1.7 V2.9 H0.4Z" fill="#e8e8e8" stroke="#303030" stroke-width="0.6"/><path d="M2.75 10.3 L5.1 7.9 H3.8 V6.1 H1.7 V7.9 H0.4Z" fill="#d08a00" stroke="#303030" stroke-width="0.6"/></svg>
<svg style="left:175.5px;top:161.5px;" width="9.8" height="9.8" viewBox="0 0 9.8 9.8"><circle cx="4.9" cy="4.9" r="4.4" fill="#fafafa" stroke="#c4a888" stroke-width="0.7"/></svg>
<div class="t" style="left:175.25px;width:10px;text-align:center;transform:scaleX(0.8696);transform-origin:50% 0;top:163.65px;font-size:6.44px;line-height:6.44px;color:#1a1a1a;">1</div>
<svg style="left:188px;top:160.5px;" width="40" height="12" viewBox="0 0 40 12"><circle cx="2.4" cy="2.2" r="1.35" fill="#5a5a5a"/><circle cx="5.6" cy="2.2" r="1.35" fill="#5a5a5a"/><rect x="1.9" y="5" width="1.6" height="6" fill="#252525"/><rect x="5.1" y="5" width="1.6" height="6" fill="#252525"/><circle cx="12.4" cy="2.2" r="1.35" fill="#5a5a5a"/><circle cx="15.6" cy="2.2" r="1.35" fill="#5a5a5a"/><path d="M11.8 11 L16.8 6.2" stroke="#505050" stroke-width="1.5"/><path d="M14.8 6.6 L17.6 9 L18.2 5.6Z" fill="#505050"/><circle cx="22.4" cy="2.2" r="1.35" fill="#5a5a5a"/><circle cx="25.6" cy="2.2" r="1.35" fill="#5a5a5a"/><rect x="22.2" y="5.2" width="5.4" height="6.4" fill="#e4e4e4" stroke="#707070" stroke-width="0.7"/><path d="M23.6 7 H26 L23.8 10 H26.2" fill="none" stroke="#808080" stroke-width="0.6"/><ellipse cx="35" cy="8" rx="3.8" ry="2.8" fill="none" stroke="#7a7a7a" stroke-width="0.7"/><path d="M34.2 10.7 L35.4 11.6 L35.6 10.7" fill="none" stroke="#7a7a7a" stroke-width="0.6"/></svg>
<div style="left:234px;top:162.9px;width:7px;height:7px;background:#fafafa;border:0.8px solid #404040;box-sizing:border-box;"></div>
<svg style="left:234.3px;top:163.20000000000002px;" width="6.5" height="6.5" viewBox="0 0 6.5 6.5"><path d="M1.2 3.2 L2.7 4.7 L5.3 1.5" fill="none" stroke="#d08a10" stroke-width="1.1"/></svg>
<div style="left:248.3px;top:161.60000000000002px;width:27.4px;height:9.5px;background:#f4f4f4;border:1px solid #585858;border-radius:1px;box-sizing:border-box;"></div>
<div class="t" style="left:250.5px;transform:scaleX(0.8696);transform-origin:0 0;top:163.60px;font-size:6.32px;line-height:6.32px;color:#18183a;">Light</div>
<div style="left:266.7px;top:162.4px;width:8.2px;height:7.9px;background:#e2e2e2;border-left:0.6px solid #b0b0b0;box-sizing:border-box;"></div>
<svg style="left:266.7px;top:162.4px;" width="8" height="8" viewBox="0 0 8 8"><path d="M2 3 H6 L4 5.2Z" fill="#101010"/></svg>
<div style="left:279.2px;top:161.60000000000002px;width:29.5px;height:9.5px;background:#f4f4f4;border:1px solid #585858;border-radius:1px;box-sizing:border-box;"></div>
<div class="t" style="left:281.4px;transform:scaleX(0.8696);transform-origin:0 0;top:163.60px;font-size:6.32px;line-height:6.32px;color:#18183a;">V</div>
<div style="left:299.7px;top:162.4px;width:8.2px;height:7.9px;background:#e2e2e2;border-left:0.6px solid #b0b0b0;box-sizing:border-box;"></div>
<svg style="left:299.7px;top:162.4px;" width="8" height="8" viewBox="0 0 8 8"><path d="M2 3 H6 L4 5.2Z" fill="#101010"/></svg>
<div style="left:312.2px;top:161.60000000000002px;width:38.5px;height:9.5px;background:#f4f4f4;border:1px solid #585858;border-radius:1px;box-sizing:border-box;"></div>
<div class="t" style="left:314.4px;transform:scaleX(0.8696);transform-origin:0 0;top:163.60px;font-size:6.32px;line-height:6.32px;color:#18183a;">V</div>
<div style="left:341.7px;top:162.4px;width:8.2px;height:7.9px;background:#e2e2e2;border-left:0.6px solid #b0b0b0;box-sizing:border-box;"></div>
<svg style="left:341.7px;top:162.4px;" width="8" height="8" viewBox="0 0 8 8"><path d="M2 3 H6 L4 5.2Z" fill="#101010"/></svg>
<div style="left:354.3px;top:161.60000000000002px;width:30px;height:9.5px;background:#f4f4f4;border:1px solid #585858;border-radius:1px;box-sizing:border-box;"></div>
<div class="t" style="left:356.5px;transform:scaleX(0.8696);transform-origin:0 0;top:163.60px;font-size:6.32px;line-height:6.32px;color:#18183a;">45</div>
<div style="left:375.3px;top:162.4px;width:8.2px;height:7.9px;background:#e2e2e2;border-left:0.6px solid #b0b0b0;box-sizing:border-box;"></div>
<svg style="left:375.3px;top:162.4px;" width="8" height="8" viewBox="0 0 8 8"><path d="M2 3 H6 L4 5.2Z" fill="#101010"/></svg>
<div style="left:387.4px;top:161.60000000000002px;width:26.6px;height:9.5px;background:#f4f4f4;border:1px solid #585858;border-radius:1px;box-sizing:border-box;"></div>
<div class="t" style="left:389.59999999999997px;transform:scaleX(0.8696);transform-origin:0 0;top:163.60px;font-size:6.32px;line-height:6.32px;color:#18183a;">2x2</div>
<div style="left:405.0px;top:162.4px;width:8.2px;height:7.9px;background:#e2e2e2;border-left:0.6px solid #b0b0b0;box-sizing:border-box;"></div>
<svg style="left:405.0px;top:162.4px;" width="8" height="8" viewBox="0 0 8 8"><path d="M2 3 H6 L4 5.2Z" fill="#101010"/></svg>
<div style="left:417.4px;top:161.60000000000002px;width:26.3px;height:9.5px;background:#ffffff;border:1px solid #585858;border-radius:1px;box-sizing:border-box;"></div>
<div style="left:434.5px;top:162.40000000000003px;width:8.4px;height:3.95px;background:#e6e6e6;border:0.8px solid #707070;box-sizing:border-box;"></div>
<div style="left:434.5px;top:166.35000000000002px;width:8.4px;height:3.95px;background:#e6e6e6;border:0.8px solid #707070;box-sizing:border-box;"></div>
<svg style="left:434.5px;top:161.60000000000002px;" width="8.4" height="9.5" viewBox="0 0 8.4 9.5"><path d="M2.3 3.65 L4.2 1.65 L6.1 3.65Z M2.3 5.85 L4.2 7.85 L6.1 5.85Z" fill="#202020"/></svg>
<div class="t" style="left:419.4px;transform:scaleX(0.8696);transform-origin:0 0;top:163.57px;font-size:6.09px;line-height:6.09px;color:#303030;">600</div>
<div style="left:447px;top:161.60000000000002px;width:105.5px;height:9.5px;background:#eeeeee;border:0.9px solid #3c3c3c;border-radius:1px;box-sizing:border-box;"></div>
<div class="t" style="left:459.75px;width:80px;text-align:center;transform:scaleX(0.8696);transform-origin:50% 0;top:163.65px;font-size:6.44px;line-height:6.44px;color:#1a1a1a;">0/600 - (0%)</div>
<div style="left:150.3px;top:174.1px;width:404.7px;height:0.7px;background:#c9c9c9;"></div>
<svg style="left:151.5px;top:179.3px;" width="7" height="7" viewBox="0 0 7 7"><path d="M1.2 1.2 L5.8 5.8 M5.8 1.2 L1.2 5.8" stroke="#151515" stroke-width="1.9"/></svg>
<svg style="left:160px;top:178.9px;" width="7.5" height="7.5" viewBox="0 0 7.5 7.5"><circle cx="3.75" cy="3.75" r="2.4" fill="none" stroke="#151515" stroke-width="1.5"/><rect x="3.05" y="0.2" width="1.4" height="1.6" fill="#151515" transform="rotate(0 3.75 3.75)"/><rect x="3.05" y="0.2" width="1.4" height="1.6" fill="#151515" transform="rotate(45 3.75 3.75)"/><rect x="3.05" y="0.2" width="1.4" height="1.6" fill="#151515" transform="rotate(90 3.75 3.75)"/><rect x="3.05" y="0.2" width="1.4" height="1.6" fill="#151515" transform="rotate(135 3.75 3.75)"/><rect x="3.05" y="0.2" width="1.4" height="1.6" fill="#151515" transform="rotate(180 3.75 3.75)"/><rect x="3.05" y="0.2" width="1.4" height="1.6" fill="#151515" transform="rotate(225 3.75 3.75)"/><rect x="3.05" y="0.2" width="1.4" height="1.6" fill="#151515" transform="rotate(270 3.75 3.75)"/><rect x="3.05" y="0.2" width="1.4" height="1.6" fill="#151515" transform="rotate(315 3.75 3.75)"/></svg>
<svg style="left:169px;top:176.4px;" width="5.5" height="11" viewBox="0 0 5.5 11"><path d="M2.75 0.5 L5.1 2.9 H3.8 V4.7 H1.7 V2.9 H0.4Z" fill="#d08a00" stroke="#303030" stroke-width="0.6"/><path d="M2.75 10.3 L5.1 7.9 H3.8 V6.1 H1.7 V7.9 H0.4Z" fill="#d08a00" stroke="#303030" stroke-width="0.6"/></svg>
<svg style="left:175.5px;top:177.6px;" width="9.8" height="9.8" viewBox="0 0 9.8 9.8"><circle cx="4.9" cy="4.9" r="4.4" fill="#fafafa" stroke="#c4a888" stroke-width="0.7"/></svg>
<div class="t" style="left:175.25px;width:10px;text-align:center;transform:scaleX(0.8696);transform-origin:50% 0;top:179.75px;font-size:6.44px;line-height:6.44px;color:#1a1a1a;">2</div>
<svg style="left:188px;top:176.6px;" width="40" height="12" viewBox="0 0 40 12"><circle cx="2.4" cy="2.2" r="1.35" fill="#5a5a5a"/><circle cx="5.6" cy="2.2" r="1.35" fill="#5a5a5a"/><rect x="1.9" y="5" width="1.6" height="6" fill="#252525"/><rect x="5.1" y="5" width="1.6" height="6" fill="#252525"/><circle cx="12.4" cy="2.2" r="1.35" fill="#5a5a5a"/><circle cx="15.6" cy="2.2" r="1.35" fill="#5a5a5a"/><path d="M11.8 11 L16.8 6.2" stroke="#505050" stroke-width="1.5"/><path d="M14.8 6.6 L17.6 9 L18.2 5.6Z" fill="#505050"/><circle cx="22.4" cy="2.2" r="1.35" fill="#5a5a5a"/><circle cx="25.6" cy="2.2" r="1.35" fill="#5a5a5a"/><rect x="22.2" y="5.2" width="5.4" height="6.4" fill="#e4e4e4" stroke="#707070" stroke-width="0.7"/><path d="M23.6 7 H26 L23.8 10 H26.2" fill="none" stroke="#808080" stroke-width="0.6"/><ellipse cx="35" cy="8" rx="3.8" ry="2.8" fill="none" stroke="#7a7a7a" stroke-width="0.7"/><path d="M34.2 10.7 L35.4 11.6 L35.6 10.7" fill="none" stroke="#7a7a7a" stroke-width="0.6"/></svg>
<div style="left:234px;top:179.0px;width:7px;height:7px;background:#fafafa;border:0.8px solid #404040;box-sizing:border-box;"></div>
<div style="left:248.3px;top:177.70000000000002px;width:27.4px;height:9.5px;background:#f4f4f4;border:1px solid #585858;border-radius:1px;box-sizing:border-box;"></div>
<div class="t" style="left:250.5px;transform:scaleX(0.8696);transform-origin:0 0;top:179.70px;font-size:6.32px;line-height:6.32px;color:#18183a;">Light</div>
<div style="left:266.7px;top:178.5px;width:8.2px;height:7.9px;background:#e2e2e2;border-left:0.6px solid #b0b0b0;box-sizing:border-box;"></div>
<svg style="left:266.7px;top:178.5px;" width="8" height="8" viewBox="0 0 8 8"><path d="M2 3 H6 L4 5.2Z" fill="#101010"/></svg>
<div style="left:279.2px;top:177.70000000000002px;width:29.5px;height:9.5px;background:#f4f4f4;border:1px solid #585858;border-radius:1px;box-sizing:border-box;"></div>
<div class="t" style="left:281.4px;transform:scaleX(0.8696);transform-origin:0 0;top:179.70px;font-size:6.32px;line-height:6.32px;color:#18183a;">None</div>
<div style="left:299.7px;top:178.5px;width:8.2px;height:7.9px;background:#e2e2e2;border-left:0.6px solid #b0b0b0;box-sizing:border-box;"></div>
<svg style="left:299.7px;top:178.5px;" width="8" height="8" viewBox="0 0 8 8"><path d="M2 3 H6 L4 5.2Z" fill="#101010"/></svg>
<div style="left:312.2px;top:177.70000000000002px;width:38.5px;height:9.5px;background:#f4f4f4;border:1px solid #585858;border-radius:1px;box-sizing:border-box;"></div>
<div style="left:341.7px;top:178.5px;width:8.2px;height:7.9px;background:#e2e2e2;border-left:0.6px solid #b0b0b0;box-sizing:border-box;"></div>
<svg style="left:341.7px;top:178.5px;" width="8" height="8" viewBox="0 0 8 8"><path d="M2 3 H6 L4 5.2Z" fill="#101010"/></svg>
<div style="left:354.3px;top:177.70000000000002px;width:30px;height:9.5px;background:#f4f4f4;border:1px solid #585858;border-radius:1px;box-sizing:border-box;"></div>
<div class="t" style="left:356.5px;transform:scaleX(0.8696);transform-origin:0 0;top:179.70px;font-size:6.32px;line-height:6.32px;color:#18183a;">0</div>
<div style="left:375.3px;top:178.5px;width:8.2px;height:7.9px;background:#e2e2e2;border-left:0.6px solid #b0b0b0;box-sizing:border-box;"></div>
<svg style="left:375.3px;top:178.5px;" width="8" height="8" viewBox="0 0 8 8"><path d="M2 3 H6 L4 5.2Z" fill="#101010"/></svg>
<div style="left:387.4px;top:177.70000000000002px;width:26.6px;height:9.5px;background:#f4f4f4;border:1px solid #585858;border-radius:1px;box-sizing:border-box;"></div>
<div class="t" style="left:389.59999999999997px;transform:scaleX(0.8696);transform-origin:0 0;top:179.70px;font-size:6.32px;line-height:6.32px;color:#18183a;">1x1</div>
<div style="left:405.0px;top:178.5px;width:8.2px;height:7.9px;background:#e2e2e2;border-left:0.6px solid #b0b0b0;box-sizing:border-box;"></div>
<svg style="left:405.0px;top:178.5px;" width="8" height="8" viewBox="0 0 8 8"><path d="M2 3 H6 L4 5.2Z" fill="#101010"/></svg>
<div style="left:417.4px;top:177.70000000000002px;width:26.3px;height:9.5px;background:#ffffff;border:1px solid #585858;border-radius:1px;box-sizing:border-box;"></div>
<div style="left:434.5px;top:178.50000000000003px;width:8.4px;height:3.95px;background:#e6e6e6;border:0.8px solid #707070;box-sizing:border-box;"></div>
<div style="left:434.5px;top:182.45000000000002px;width:8.4px;height:3.95px;background:#e6e6e6;border:0.8px solid #707070;box-sizing:border-box;"></div>
<svg style="left:434.5px;top:177.70000000000002px;" width="8.4" height="9.5" viewBox="0 0 8.4 9.5"><path d="M2.3 3.65 L4.2 1.65 L6.1 3.65Z M2.3 5.85 L4.2 7.85 L6.1 5.85Z" fill="#202020"/></svg>
<div class="t" style="left:419.4px;transform:scaleX(0.8696);transform-origin:0 0;top:179.67px;font-size:6.09px;line-height:6.09px;color:#303030;">1</div>
<div style="left:447px;top:177.70000000000002px;width:105.5px;height:9.5px;background:#eeeeee;border:0.9px solid #3c3c3c;border-radius:1px;box-sizing:border-box;"></div>
<div class="t" style="left:459.75px;width:80px;text-align:center;transform:scaleX(0.8696);transform-origin:50% 0;top:179.75px;font-size:6.44px;line-height:6.44px;color:#1a1a1a;">0/1 - (0%)</div>
<div style="left:150.3px;top:190.2px;width:404.7px;height:0.7px;background:#c9c9c9;"></div>
<svg style="left:151.5px;top:195.4px;" width="7" height="7" viewBox="0 0 7 7"><path d="M1.2 1.2 L5.8 5.8 M5.8 1.2 L1.2 5.8" stroke="#151515" stroke-width="1.9"/></svg>
<svg style="left:160px;top:195.0px;" width="7.5" height="7.5" viewBox="0 0 7.5 7.5"><circle cx="3.75" cy="3.75" r="2.4" fill="none" stroke="#151515" stroke-width="1.5"/><rect x="3.05" y="0.2" width="1.4" height="1.6" fill="#151515" transform="rotate(0 3.75 3.75)"/><rect x="3.05" y="0.2" width="1.4" height="1.6" fill="#151515" transform="rotate(45 3.75 3.75)"/><rect x="3.05" y="0.2" width="1.4" height="1.6" fill="#151515" transform="rotate(90 3.75 3.75)"/><rect x="3.05" y="0.2" width="1.4" height="1.6" fill="#151515" transform="rotate(135 3.75 3.75)"/><rect x="3.05" y="0.2" width="1.4" height="1.6" fill="#151515" transform="rotate(180 3.75 3.75)"/><rect x="3.05" y="0.2" width="1.4" height="1.6" fill="#151515" transform="rotate(225 3.75 3.75)"/><rect x="3.05" y="0.2" width="1.4" height="1.6" fill="#151515" transform="rotate(270 3.75 3.75)"/><rect x="3.05" y="0.2" width="1.4" height="1.6" fill="#151515" transform="rotate(315 3.75 3.75)"/></svg>
<svg style="left:169px;top:192.5px;" width="5.5" height="11" viewBox="0 0 5.5 11"><path d="M2.75 0.5 L5.1 2.9 H3.8 V4.7 H1.7 V2.9 H0.4Z" fill="#d08a00" stroke="#303030" stroke-width="0.6"/><path d="M2.75 10.3 L5.1 7.9 H3.8 V6.1 H1.7 V7.9 H0.4Z" fill="#d08a00" stroke="#303030" stroke-width="0.6"/></svg>
<svg style="left:175.5px;top:193.7px;" width="9.8" height="9.8" viewBox="0 0 9.8 9.8"><circle cx="4.9" cy="4.9" r="4.4" fill="#fafafa" stroke="#c4a888" stroke-width="0.7"/></svg>
<div class="t" style="left:175.25px;width:10px;text-align:center;transform:scaleX(0.8696);transform-origin:50% 0;top:195.85px;font-size:6.44px;line-height:6.44px;color:#1a1a1a;">3</div>
<svg style="left:188px;top:192.7px;" width="40" height="12" viewBox="0 0 40 12"><circle cx="2.4" cy="2.2" r="1.35" fill="#5a5a5a"/><circle cx="5.6" cy="2.2" r="1.35" fill="#5a5a5a"/><rect x="1.9" y="5" width="1.6" height="6" fill="#252525"/><rect x="5.1" y="5" width="1.6" height="6" fill="#252525"/><circle cx="12.4" cy="2.2" r="1.35" fill="#5a5a5a"/><circle cx="15.6" cy="2.2" r="1.35" fill="#5a5a5a"/><path d="M11.8 11 L16.8 6.2" stroke="#505050" stroke-width="1.5"/><path d="M14.8 6.6 L17.6 9 L18.2 5.6Z" fill="#505050"/><circle cx="22.4" cy="2.2" r="1.35" fill="#5a5a5a"/><circle cx="25.6" cy="2.2" r="1.35" fill="#5a5a5a"/><rect x="22.2" y="5.2" width="5.4" height="6.4" fill="#e4e4e4" stroke="#707070" stroke-width="0.7"/><path d="M23.6 7 H26 L23.8 10 H26.2" fill="none" stroke="#808080" stroke-width="0.6"/><ellipse cx="35" cy="8" rx="3.8" ry="2.8" fill="none" stroke="#7a7a7a" stroke-width="0.7"/><path d="M34.2 10.7 L35.4 11.6 L35.6 10.7" fill="none" stroke="#7a7a7a" stroke-width="0.6"/></svg>
<div style="left:234px;top:195.1px;width:7px;height:7px;background:#fafafa;border:0.8px solid #404040;box-sizing:border-box;"></div>
<div style="left:248.3px;top:193.8px;width:27.4px;height:9.5px;background:#f4f4f4;border:1px solid #585858;border-radius:1px;box-sizing:border-box;"></div>
<div class="t" style="left:250.5px;transform:scaleX(0.8696);transform-origin:0 0;top:195.80px;font-size:6.32px;line-height:6.32px;color:#18183a;">Light</div>
<div style="left:266.7px;top:194.6px;width:8.2px;height:7.9px;background:#e2e2e2;border-left:0.6px solid #b0b0b0;box-sizing:border-box;"></div>
<svg style="left:266.7px;top:194.6px;" width="8" height="8" viewBox="0 0 8 8"><path d="M2 3 H6 L4 5.2Z" fill="#101010"/></svg>
<div style="left:279.2px;top:193.8px;width:29.5px;height:9.5px;background:#f4f4f4;border:1px solid #585858;border-radius:1px;box-sizing:border-box;"></div>
<div class="t" style="left:281.4px;transform:scaleX(0.8696);transform-origin:0 0;top:195.80px;font-size:6.32px;line-height:6.32px;color:#18183a;">None</div>
<div style="left:299.7px;top:194.6px;width:8.2px;height:7.9px;background:#e2e2e2;border-left:0.6px solid #b0b0b0;box-sizing:border-box;"></div>
<svg style="left:299.7px;top:194.6px;" width="8" height="8" viewBox="0 0 8 8"><path d="M2 3 H6 L4 5.2Z" fill="#101010"/></svg>
<div style="left:312.2px;top:193.8px;width:38.5px;height:9.5px;background:#f4f4f4;border:1px solid #585858;border-radius:1px;box-sizing:border-box;"></div>
<div style="left:341.7px;top:194.6px;width:8.2px;height:7.9px;background:#e2e2e2;border-left:0.6px solid #b0b0b0;box-sizing:border-box;"></div>
<svg style="left:341.7px;top:194.6px;" width="8" height="8" viewBox="0 0 8 8"><path d="M2 3 H6 L4 5.2Z" fill="#101010"/></svg>
<div style="left:354.3px;top:193.8px;width:30px;height:9.5px;background:#f4f4f4;border:1px solid #585858;border-radius:1px;box-sizing:border-box;"></div>
<div class="t" style="left:356.5px;transform:scaleX(0.8696);transform-origin:0 0;top:195.80px;font-size:6.32px;line-height:6.32px;color:#18183a;">0</div>
<div style="left:375.3px;top:194.6px;width:8.2px;height:7.9px;background:#e2e2e2;border-left:0.6px solid #b0b0b0;box-sizing:border-box;"></div>
<svg style="left:375.3px;top:194.6px;" width="8" height="8" viewBox="0 0 8 8"><path d="M2 3 H6 L4 5.2Z" fill="#101010"/></svg>
<div style="left:387.4px;top:193.8px;width:26.6px;height:9.5px;background:#f4f4f4;border:1px solid #585858;border-radius:1px;box-sizing:border-box;"></div>
<div class="t" style="left:389.59999999999997px;transform:scaleX(0.8696);transform-origin:0 0;top:195.80px;font-size:6.32px;line-height:6.32px;color:#18183a;">1x1</div>
<div style="left:405.0px;top:194.6px;width:8.2px;height:7.9px;background:#e2e2e2;border-left:0.6px solid #b0b0b0;box-sizing:border-box;"></div>
<svg style="left:405.0px;top:194.6px;" width="8" height="8" viewBox="0 0 8 8"><path d="M2 3 H6 L4 5.2Z" fill="#101010"/></svg>
<div style="left:417.4px;top:193.8px;width:26.3px;height:9.5px;background:#ffffff;border:1px solid #585858;border-radius:1px;box-sizing:border-box;"></div>
<div style="left:434.5px;top:194.60000000000002px;width:8.4px;height:3.95px;background:#e6e6e6;border:0.8px solid #707070;box-sizing:border-box;"></div>
<div style="left:434.5px;top:198.55px;width:8.4px;height:3.95px;background:#e6e6e6;border:0.8px solid #707070;box-sizing:border-box;"></div>
<svg style="left:434.5px;top:193.8px;" width="8.4" height="9.5" viewBox="0 0 8.4 9.5"><path d="M2.3 3.65 L4.2 1.65 L6.1 3.65Z M2.3 5.85 L4.2 7.85 L6.1 5.85Z" fill="#202020"/></svg>
<div class="t" style="left:419.4px;transform:scaleX(0.8696);transform-origin:0 0;top:195.77px;font-size:6.09px;line-height:6.09px;color:#303030;">1</div>
<div style="left:447px;top:193.8px;width:105.5px;height:9.5px;background:#eeeeee;border:0.9px solid #3c3c3c;border-radius:1px;box-sizing:border-box;"></div>
<div class="t" style="left:459.75px;width:80px;text-align:center;transform:scaleX(0.8696);transform-origin:50% 0;top:195.85px;font-size:6.44px;line-height:6.44px;color:#1a1a1a;">0/1 - (0%)</div>
<div style="left:150.3px;top:206.3px;width:404.7px;height:0.7px;background:#c9c9c9;"></div>
<svg style="left:151.5px;top:211.50000000000003px;" width="7" height="7" viewBox="0 0 7 7"><path d="M1.2 1.2 L5.8 5.8 M5.8 1.2 L1.2 5.8" stroke="#151515" stroke-width="1.9"/></svg>
<svg style="left:160px;top:211.10000000000002px;" width="7.5" height="7.5" viewBox="0 0 7.5 7.5"><circle cx="3.75" cy="3.75" r="2.4" fill="none" stroke="#151515" stroke-width="1.5"/><rect x="3.05" y="0.2" width="1.4" height="1.6" fill="#151515" transform="rotate(0 3.75 3.75)"/><rect x="3.05" y="0.2" width="1.4" height="1.6" fill="#151515" transform="rotate(45 3.75 3.75)"/><rect x="3.05" y="0.2" width="1.4" height="1.6" fill="#151515" transform="rotate(90 3.75 3.75)"/><rect x="3.05" y="0.2" width="1.4" height="1.6" fill="#151515" transform="rotate(135 3.75 3.75)"/><rect x="3.05" y="0.2" width="1.4" height="1.6" fill="#151515" transform="rotate(180 3.75 3.75)"/><rect x="3.05" y="0.2" width="1.4" height="1.6" fill="#151515" transform="rotate(225 3.75 3.75)"/><rect x="3.05" y="0.2" width="1.4" height="1.6" fill="#151515" transform="rotate(270 3.75 3.75)"/><rect x="3.05" y="0.2" width="1.4" height="1.6" fill="#151515" transform="rotate(315 3.75 3.75)"/></svg>
<svg style="left:169px;top:208.60000000000002px;" width="5.5" height="11" viewBox="0 0 5.5 11"><path d="M2.75 0.5 L5.1 2.9 H3.8 V4.7 H1.7 V2.9 H0.4Z" fill="#d08a00" stroke="#303030" stroke-width="0.6"/><path d="M2.75 10.3 L5.1 7.9 H3.8 V6.1 H1.7 V7.9 H0.4Z" fill="#d08a00" stroke="#303030" stroke-width="0.6"/></svg>
<svg style="left:175.5px;top:209.8px;" width="9.8" height="9.8" viewBox="0 0 9.8 9.8"><circle cx="4.9" cy="4.9" r="4.4" fill="#fafafa" stroke="#c4a888" stroke-width="0.7"/></svg>
<div class="t" style="left:175.25px;width:10px;text-align:center;transform:scaleX(0.8696);transform-origin:50% 0;top:211.95px;font-size:6.44px;line-height:6.44px;color:#1a1a1a;">4</div>
<svg style="left:188px;top:208.8px;" width="40" height="12" viewBox="0 0 40 12"><circle cx="2.4" cy="2.2" r="1.35" fill="#5a5a5a"/><circle cx="5.6" cy="2.2" r="1.35" fill="#5a5a5a"/><rect x="1.9" y="5" width="1.6" height="6" fill="#252525"/><rect x="5.1" y="5" width="1.6" height="6" fill="#252525"/><circle cx="12.4" cy="2.2" r="1.35" fill="#5a5a5a"/><circle cx="15.6" cy="2.2" r="1.35" fill="#5a5a5a"/><path d="M11.8 11 L16.8 6.2" stroke="#505050" stroke-width="1.5"/><path d="M14.8 6.6 L17.6 9 L18.2 5.6Z" fill="#505050"/><circle cx="22.4" cy="2.2" r="1.35" fill="#5a5a5a"/><circle cx="25.6" cy="2.2" r="1.35" fill="#5a5a5a"/><rect x="22.2" y="5.2" width="5.4" height="6.4" fill="#e4e4e4" stroke="#707070" stroke-width="0.7"/><path d="M23.6 7 H26 L23.8 10 H26.2" fill="none" stroke="#808080" stroke-width="0.6"/><ellipse cx="35" cy="8" rx="3.8" ry="2.8" fill="none" stroke="#7a7a7a" stroke-width="0.7"/><path d="M34.2 10.7 L35.4 11.6 L35.6 10.7" fill="none" stroke="#7a7a7a" stroke-width="0.6"/></svg>
<div style="left:234px;top:211.20000000000002px;width:7px;height:7px;background:#fafafa;border:0.8px solid #404040;box-sizing:border-box;"></div>
<div style="left:248.3px;top:209.90000000000003px;width:27.4px;height:9.5px;background:#f4f4f4;border:1px solid #585858;border-radius:1px;box-sizing:border-box;"></div>
<div class="t" style="left:250.5px;transform:scaleX(0.8696);transform-origin:0 0;top:211.90px;font-size:6.32px;line-height:6.32px;color:#18183a;">Light</div>
<div style="left:266.7px;top:210.70000000000002px;width:8.2px;height:7.9px;background:#e2e2e2;border-left:0.6px solid #b0b0b0;box-sizing:border-box;"></div>
<svg style="left:266.7px;top:210.70000000000002px;" width="8" height="8" viewBox="0 0 8 8"><path d="M2 3 H6 L4 5.2Z" fill="#101010"/></svg>
<div style="left:279.2px;top:209.90000000000003px;width:29.5px;height:9.5px;background:#f4f4f4;border:1px solid #585858;border-radius:1px;box-sizing:border-box;"></div>
<div class="t" style="left:281.4px;transform:scaleX(0.8696);transform-origin:0 0;top:211.90px;font-size:6.32px;line-height:6.32px;color:#18183a;">None</div>
<div style="left:299.7px;top:210.70000000000002px;width:8.2px;height:7.9px;background:#e2e2e2;border-left:0.6px solid #b0b0b0;box-sizing:border-box;"></div>
<svg style="left:299.7px;top:210.70000000000002px;" width="8" height="8" viewBox="0 0 8 8"><path d="M2 3 H6 L4 5.2Z" fill="#101010"/></svg>
<div style="left:312.2px;top:209.90000000000003px;width:38.5px;height:9.5px;background:#f4f4f4;border:1px solid #585858;border-radius:1px;box-sizing:border-box;"></div>
<div style="left:341.7px;top:210.70000000000002px;width:8.2px;height:7.9px;background:#e2e2e2;border-left:0.6px solid #b0b0b0;box-sizing:border-box;"></div>
<svg style="left:341.7px;top:210.70000000000002px;" width="8" height="8" viewBox="0 0 8 8"><path d="M2 3 H6 L4 5.2Z" fill="#101010"/></svg>
<div style="left:354.3px;top:209.90000000000003px;width:30px;height:9.5px;background:#f4f4f4;border:1px solid #585858;border-radius:1px;box-sizing:border-box;"></div>
<div class="t" style="left:356.5px;transform:scaleX(0.8696);transform-origin:0 0;top:211.90px;font-size:6.32px;line-height:6.32px;color:#18183a;">0</div>
<div style="left:375.3px;top:210.70000000000002px;width:8.2px;height:7.9px;background:#e2e2e2;border-left:0.6px solid #b0b0b0;box-sizing:border-box;"></div>
<svg style="left:375.3px;top:210.70000000000002px;" width="8" height="8" viewBox="0 0 8 8"><path d="M2 3 H6 L4 5.2Z" fill="#101010"/></svg>
<div style="left:387.4px;top:209.90000000000003px;width:26.6px;height:9.5px;background:#f4f4f4;border:1px solid #585858;border-radius:1px;box-sizing:border-box;"></div>
<div class="t" style="left:389.59999999999997px;transform:scaleX(0.8696);transform-origin:0 0;top:211.90px;font-size:6.32px;line-height:6.32px;color:#18183a;">1x1</div>
<div style="left:405.0px;top:210.70000000000002px;width:8.2px;height:7.9px;background:#e2e2e2;border-left:0.6px solid #b0b0b0;box-sizing:border-box;"></div>
<svg style="left:405.0px;top:210.70000000000002px;" width="8" height="8" viewBox="0 0 8 8"><path d="M2 3 H6 L4 5.2Z" fill="#101010"/></svg>
<div style="left:417.4px;top:209.90000000000003px;width:26.3px;height:9.5px;background:#ffffff;border:1px solid #585858;border-radius:1px;box-sizing:border-box;"></div>
<div style="left:434.5px;top:210.70000000000005px;width:8.4px;height:3.95px;background:#e6e6e6;border:0.8px solid #707070;box-sizing:border-box;"></div>
<div style="left:434.5px;top:214.65000000000003px;width:8.4px;height:3.95px;background:#e6e6e6;border:0.8px solid #707070;box-sizing:border-box;"></div>
<svg style="left:434.5px;top:209.90000000000003px;" width="8.4" height="9.5" viewBox="0 0 8.4 9.5"><path d="M2.3 3.65 L4.2 1.65 L6.1 3.65Z M2.3 5.85 L4.2 7.85 L6.1 5.85Z" fill="#202020"/></svg>
<div class="t" style="left:419.4px;transform:scaleX(0.8696);transform-origin:0 0;top:211.87px;font-size:6.09px;line-height:6.09px;color:#303030;">1</div>
<div style="left:447px;top:209.90000000000003px;width:105.5px;height:9.5px;background:#eeeeee;border:0.9px solid #3c3c3c;border-radius:1px;box-sizing:border-box;"></div>
<div class="t" style="left:459.75px;width:80px;text-align:center;transform:scaleX(0.8696);transform-origin:50% 0;top:211.95px;font-size:6.44px;line-height:6.44px;color:#1a1a1a;">0/1 - (0%)</div>
<div style="left:150.3px;top:222.4px;width:404.7px;height:0.7px;background:#c9c9c9;"></div>
<svg style="left:151.5px;top:227.60000000000002px;" width="7" height="7" viewBox="0 0 7 7"><path d="M1.2 1.2 L5.8 5.8 M5.8 1.2 L1.2 5.8" stroke="#151515" stroke-width="1.9"/></svg>
<svg style="left:160px;top:227.20000000000002px;" width="7.5" height="7.5" viewBox="0 0 7.5 7.5"><circle cx="3.75" cy="3.75" r="2.4" fill="none" stroke="#151515" stroke-width="1.5"/><rect x="3.05" y="0.2" width="1.4" height="1.6" fill="#151515" transform="rotate(0 3.75 3.75)"/><rect x="3.05" y="0.2" width="1.4" height="1.6" fill="#151515" transform="rotate(45 3.75 3.75)"/><rect x="3.05" y="0.2" width="1.4" height="1.6" fill="#151515" transform="rotate(90 3.75 3.75)"/><rect x="3.05" y="0.2" width="1.4" height="1.6" fill="#151515" transform="rotate(135 3.75 3.75)"/><rect x="3.05" y="0.2" width="1.4" height="1.6" fill="#151515" transform="rotate(180 3.75 3.75)"/><rect x="3.05" y="0.2" width="1.4" height="1.6" fill="#151515" transform="rotate(225 3.75 3.75)"/><rect x="3.05" y="0.2" width="1.4" height="1.6" fill="#151515" transform="rotate(270 3.75 3.75)"/><rect x="3.05" y="0.2" width="1.4" height="1.6" fill="#151515" transform="rotate(315 3.75 3.75)"/></svg>
<svg style="left:169px;top:224.70000000000002px;" width="5.5" height="11" viewBox="0 0 5.5 11"><path d="M2.75 0.5 L5.1 2.9 H3.8 V4.7 H1.7 V2.9 H0.4Z" fill="#d08a00" stroke="#303030" stroke-width="0.6"/><path d="M2.75 10.3 L5.1 7.9 H3.8 V6.1 H1.7 V7.9 H0.4Z" fill="#e8e8e8" stroke="#303030" stroke-width="0.6"/></svg>
<svg style="left:175.5px;top:225.9px;" width="9.8" height="9.8" viewBox="0 0 9.8 9.8"><circle cx="4.9" cy="4.9" r="4.4" fill="#fafafa" stroke="#c4a888" stroke-width="0.7"/></svg>
<div class="t" style="left:175.25px;width:10px;text-align:center;transform:scaleX(0.8696);transform-origin:50% 0;top:228.05px;font-size:6.44px;line-height:6.44px;color:#1a1a1a;">5</div>
<svg style="left:188px;top:224.9px;" width="40" height="12" viewBox="0 0 40 12"><circle cx="2.4" cy="2.2" r="1.35" fill="#5a5a5a"/><circle cx="5.6" cy="2.2" r="1.35" fill="#5a5a5a"/><rect x="1.9" y="5" width="1.6" height="6" fill="#252525"/><rect x="5.1" y="5" width="1.6" height="6" fill="#252525"/><circle cx="12.4" cy="2.2" r="1.35" fill="#5a5a5a"/><circle cx="15.6" cy="2.2" r="1.35" fill="#5a5a5a"/><path d="M11.8 11 L16.8 6.2" stroke="#505050" stroke-width="1.5"/><path d="M14.8 6.6 L17.6 9 L18.2 5.6Z" fill="#505050"/><circle cx="22.4" cy="2.2" r="1.35" fill="#5a5a5a"/><circle cx="25.6" cy="2.2" r="1.35" fill="#5a5a5a"/><rect x="22.2" y="5.2" width="5.4" height="6.4" fill="#e4e4e4" stroke="#707070" stroke-width="0.7"/><path d="M23.6 7 H26 L23.8 10 H26.2" fill="none" stroke="#808080" stroke-width="0.6"/><ellipse cx="35" cy="8" rx="3.8" ry="2.8" fill="none" stroke="#7a7a7a" stroke-width="0.7"/><path d="M34.2 10.7 L35.4 11.6 L35.6 10.7" fill="none" stroke="#7a7a7a" stroke-width="0.6"/></svg>
<div style="left:234px;top:227.3px;width:7px;height:7px;background:#fafafa;border:0.8px solid #404040;box-sizing:border-box;"></div>
<div style="left:248.3px;top:226.00000000000003px;width:27.4px;height:9.5px;background:#f4f4f4;border:1px solid #585858;border-radius:1px;box-sizing:border-box;"></div>
<div class="t" style="left:250.5px;transform:scaleX(0.8696);transform-origin:0 0;top:228.00px;font-size:6.32px;line-height:6.32px;color:#18183a;">Light</div>
<div style="left:266.7px;top:226.8px;width:8.2px;height:7.9px;background:#e2e2e2;border-left:0.6px solid #b0b0b0;box-sizing:border-box;"></div>
<svg style="left:266.7px;top:226.8px;" width="8" height="8" viewBox="0 0 8 8"><path d="M2 3 H6 L4 5.2Z" fill="#101010"/></svg>
<div style="left:279.2px;top:226.00000000000003px;width:29.5px;height:9.5px;background:#f4f4f4;border:1px solid #585858;border-radius:1px;box-sizing:border-box;"></div>
<div class="t" style="left:281.4px;transform:scaleX(0.8696);transform-origin:0 0;top:228.00px;font-size:6.32px;line-height:6.32px;color:#18183a;">None</div>
<div style="left:299.7px;top:226.8px;width:8.2px;height:7.9px;background:#e2e2e2;border-left:0.6px solid #b0b0b0;box-sizing:border-box;"></div>
<svg style="left:299.7px;top:226.8px;" width="8" height="8" viewBox="0 0 8 8"><path d="M2 3 H6 L4 5.2Z" fill="#101010"/></svg>
<div style="left:312.2px;top:226.00000000000003px;width:38.5px;height:9.5px;background:#f4f4f4;border:1px solid #585858;border-radius:1px;box-sizing:border-box;"></div>
<div style="left:341.7px;top:226.8px;width:8.2px;height:7.9px;background:#e2e2e2;border-left:0.6px solid #b0b0b0;box-sizing:border-box;"></div>
<svg style="left:341.7px;top:226.8px;" width="8" height="8" viewBox="0 0 8 8"><path d="M2 3 H6 L4 5.2Z" fill="#101010"/></svg>
<div style="left:354.3px;top:226.00000000000003px;width:30px;height:9.5px;background:#f4f4f4;border:1px solid #585858;border-radius:1px;box-sizing:border-box;"></div>
<div class="t" style="left:356.5px;transform:scaleX(0.8696);transform-origin:0 0;top:228.00px;font-size:6.32px;line-height:6.32px;color:#18183a;">0</div>
<div style="left:375.3px;top:226.8px;width:8.2px;height:7.9px;background:#e2e2e2;border-left:0.6px solid #b0b0b0;box-sizing:border-box;"></div>
<svg style="left:375.3px;top:226.8px;" width="8" height="8" viewBox="0 0 8 8"><path d="M2 3 H6 L4 5.2Z" fill="#101010"/></svg>
<div style="left:387.4px;top:226.00000000000003px;width:26.6px;height:9.5px;background:#f4f4f4;border:1px solid #585858;border-radius:1px;box-sizing:border-box;"></div>
<div class="t" style="left:389.59999999999997px;transform:scaleX(0.8696);transform-origin:0 0;top:228.00px;font-size:6.32px;line-height:6.32px;color:#18183a;">1x1</div>
<div style="left:405.0px;top:226.8px;width:8.2px;height:7.9px;background:#e2e2e2;border-left:0.6px solid #b0b0b0;box-sizing:border-box;"></div>
<svg style="left:405.0px;top:226.8px;" width="8" height="8" viewBox="0 0 8 8"><path d="M2 3 H6 L4 5.2Z" fill="#101010"/></svg>
<div style="left:417.4px;top:226.00000000000003px;width:26.3px;height:9.5px;background:#ffffff;border:1px solid #585858;border-radius:1px;box-sizing:border-box;"></div>
<div style="left:434.5px;top:226.80000000000004px;width:8.4px;height:3.95px;background:#e6e6e6;border:0.8px solid #707070;box-sizing:border-box;"></div>
<div style="left:434.5px;top:230.75000000000003px;width:8.4px;height:3.95px;background:#e6e6e6;border:0.8px solid #707070;box-sizing:border-box;"></div>
<svg style="left:434.5px;top:226.00000000000003px;" width="8.4" height="9.5" viewBox="0 0 8.4 9.5"><path d="M2.3 3.65 L4.2 1.65 L6.1 3.65Z M2.3 5.85 L4.2 7.85 L6.1 5.85Z" fill="#202020"/></svg>
<div class="t" style="left:419.4px;transform:scaleX(0.8696);transform-origin:0 0;top:227.97px;font-size:6.09px;line-height:6.09px;color:#303030;">1</div>
<div style="left:447px;top:226.00000000000003px;width:105.5px;height:9.5px;background:#eeeeee;border:0.9px solid #3c3c3c;border-radius:1px;box-sizing:border-box;"></div>
<div class="t" style="left:459.75px;width:80px;text-align:center;transform:scaleX(0.8696);transform-origin:50% 0;top:228.05px;font-size:6.44px;line-height:6.44px;color:#1a1a1a;">0/1 - (0%)</div>
<div style="left:149.3px;top:406.8px;width:5.4px;height:12.7px;background:#ececec;border:1px solid #505050;border-radius:1px;box-sizing:border-box;"></div>
<svg style="left:149.3px;top:406.8px;" width="5.4" height="12.7" viewBox="0 0 5.4 12.7"><path d="M1.6 4.4 L3.6 6.35 L1.6 8.3Z" fill="#101010"/></svg>
<div style="left:156.2px;top:407px;width:75px;height:12.8px;background:#ececec;border:1px solid #505050;border-radius:1px;box-sizing:border-box;background:#eaeaea;"></div>
<svg style="left:167.5px;top:409.3px;" width="8" height="8" viewBox="0 0 8 8"><path d="M4 0.8 V7.2 M0.8 4 H7.2" stroke="#101010" stroke-width="1.7"/></svg>
<div class="t" style="left:176px;transform:scaleX(0.8696);transform-origin:0 0;top:410.75px;font-size:6.44px;line-height:6.44px;color:#1a1a2a;">Add New Event</div>
<svg style="left:223.3px;top:412px;" width="5" height="4" viewBox="0 0 5 4"><path d="M1 1 H4 L2.5 2.8Z" fill="#101010"/></svg>
<svg style="left:252.5px;top:408.5px;" width="7.5" height="8.5" viewBox="0 0 7.5 8.5"><circle cx="3.7" cy="4.9" r="2.8" fill="#fafafa" stroke="#303030" stroke-width="0.8"/><path d="M3.7 4.9 L4.8 3.6" stroke="#d08a10" stroke-width="1"/><path d="M2.8 1.2 H4.6" stroke="#303030" stroke-width="0.8"/></svg>
<div class="t" style="left:263px;transform:scaleX(0.8696);transform-origin:0 0;top:411.36px;font-size:5.92px;line-height:5.92px;color:#141414;">Elapsed:</div>
<div class="t" style="left:286.6px;transform:scaleX(0.8696);transform-origin:0 0;top:411.38px;font-size:5.98px;line-height:5.98px;color:#141414;">00:00:50</div>
<div style="left:313.4px;top:408.6px;width:83.2px;height:8.4px;background:#f2f2f2;border:0.9px solid #3c3c3c;border-radius:1px;box-sizing:border-box;"></div>
<div class="t" style="left:340.00px;width:30px;text-align:center;transform:scaleX(0.8696);transform-origin:50% 0;top:410.15px;font-size:6.44px;line-height:6.44px;color:#141414;">0%</div>
<svg style="left:404.8px;top:408.6px;" width="5.5" height="8.5" viewBox="0 0 5.5 8.5"><path d="M0.6 0.8 H4.9 M0.6 7.7 H4.9" stroke="#404040" stroke-width="0.9"/><path d="M1 1.2 L4.5 1.2 L2.75 4.2 L4.5 7.3 L1 7.3 L2.75 4.2Z" fill="#d8a040"/></svg>
<div class="t" style="left:415px;transform:scaleX(0.8696);transform-origin:0 0;top:411.36px;font-size:5.92px;line-height:5.92px;color:#141414;">Remaining:</div>
<div class="t" style="left:447px;transform:scaleX(0.8696);transform-origin:0 0;top:411.38px;font-size:5.98px;line-height:5.98px;color:#141414;">10:50:00</div>
<div style="left:478px;top:407px;width:64.4px;height:11.6px;background:#ececec;border:1px solid #505050;border-radius:1px;box-sizing:border-box;background:#f2f2f2;"></div>
<div style="left:485.3px;top:410px;width:1.5px;height:6px;background:#101010;"></div>
<div style="left:488.3px;top:410px;width:1.5px;height:6px;background:#101010;"></div>
<div class="t" style="left:492.5px;transform:scaleX(0.8696);transform-origin:0 0;top:410.50px;font-size:6.32px;line-height:6.32px;color:#101020;">Pause Sequence</div>
<svg style="left:543.5px;top:407.5px;" width="11.5" height="11.5" viewBox="0 0 11.5 11.5"><circle cx="5.75" cy="5.75" r="5" fill="#e8e8e8" stroke="#404040" stroke-width="0.8"/><circle cx="5.75" cy="3" r="0.9" fill="#c07000"/><path d="M5.75 4.6 V8.6 M4.5 8.6 H7" stroke="#c07000" stroke-width="1.1"/></svg>
<div style="left:688.5px;top:0px;width:109px;height:1.2px;background:#f2f2f2;"></div>
<div style="left:704px;top:0px;width:0.6px;height:1.2px;background:#c04040;"></div>
<div style="left:689px;top:1px;width:111px;height:64.5px;background:#c6c6c6;border:1px solid #3a3a3a;border-right:2px solid #333333;box-sizing:border-box;"></div>
<div style="left:796.5px;top:2px;width:1px;height:62.5px;background:#d8d8d8;"></div>
<svg style="left:695px;top:5px;" width="4.5" height="9" viewBox="0 0 4.5 9"><rect x="0.8" y="0.5" width="2.9" height="8" rx="1.4" fill="#e8d090" stroke="#707070" stroke-width="0.5"/><circle cx="2.25" cy="6.5" r="1.2" fill="#c07000"/></svg>
<div class="t" style="left:702.3px;transform:scaleX(0.8696);transform-origin:0 0;top:7.06px;font-size:6.21px;line-height:6.21px;color:#141414;">Temperature: 12.0/NA (0%)</div>
<div style="left:695px;top:15.899999999999999px;width:98px;height:1.4px;background:#7a7a7a;"></div>
<svg style="left:693.2px;top:20.5px;" width="7" height="7" viewBox="0 0 7 7"><circle cx="3.5" cy="3.5" r="2.8" fill="none" stroke="#202020" stroke-width="0.8"/><path d="M3.5 2 V4.5" stroke="#202020" stroke-width="0.9"/></svg>
<div class="t" style="left:701.8px;transform:scaleX(0.8696);transform-origin:0 0;top:21.26px;font-size:6.21px;line-height:6.21px;color:#141414;">Cooler:</div>
<div style="left:733px;top:19.4px;width:29px;height:8.5px;background:#f8f8f8;border:0.9px solid #404040;border-radius:5px;box-sizing:border-box;"></div>
<svg style="left:735px;top:21.2px;" width="5" height="5" viewBox="0 0 5 5"><circle cx="2.5" cy="2.5" r="2" fill="#c88000"/></svg>
<div class="t" style="left:694.5px;transform:scaleX(0.8696);transform-origin:0 0;top:32.06px;font-size:6.21px;line-height:6.21px;color:#141414;">Set to</div>
<div style="left:711px;top:30px;width:20.8px;height:9.5px;background:#ffffff;border:1px solid #585858;border-radius:1px;box-sizing:border-box;"></div>
<div style="left:722.5999999999999px;top:30.8px;width:8.4px;height:3.95px;background:#e6e6e6;border:0.8px solid #707070;box-sizing:border-box;"></div>
<div style="left:722.5999999999999px;top:34.75px;width:8.4px;height:3.95px;background:#e6e6e6;border:0.8px solid #707070;box-sizing:border-box;"></div>
<svg style="left:722.5999999999999px;top:30px;" width="8.4" height="9.5" viewBox="0 0 8.4 9.5"><path d="M2.3 3.65 L4.2 1.65 L6.1 3.65Z M2.3 5.85 L4.2 7.85 L6.1 5.85Z" fill="#202020"/></svg>
<div class="t" style="left:713px;transform:scaleX(0.8696);transform-origin:0 0;top:31.97px;font-size:6.09px;line-height:6.09px;color:#7088b0;">0</div>
<div class="t" style="left:732.9px;transform:scaleX(0.8696);transform-origin:0 0;top:32.06px;font-size:6.21px;line-height:6.21px;color:#141414;">C in</div>
<div style="left:743.2px;top:30px;width:20.1px;height:9.5px;background:#ffffff;border:1px solid #585858;border-radius:1px;box-sizing:border-box;"></div>
<div style="left:754.1px;top:30.8px;width:8.4px;height:3.95px;background:#e6e6e6;border:0.8px solid #707070;box-sizing:border-box;"></div>
<div style="left:754.1px;top:34.75px;width:8.4px;height:3.95px;background:#e6e6e6;border:0.8px solid #707070;box-sizing:border-box;"></div>
<svg style="left:754.1px;top:30px;" width="8.4" height="9.5" viewBox="0 0 8.4 9.5"><path d="M2.3 3.65 L4.2 1.65 L6.1 3.65Z M2.3 5.85 L4.2 7.85 L6.1 5.85Z" fill="#202020"/></svg>
<div class="t" style="left:745.2px;transform:scaleX(0.8696);transform-origin:0 0;top:31.97px;font-size:6.09px;line-height:6.09px;color:#8090b0;">0</div>
<div class="t" style="left:765.3px;transform:scaleX(0.8696);transform-origin:0 0;top:32.46px;font-size:6.21px;line-height:6.21px;color:#141414;">m</div>
<div style="left:772.4px;top:29px;width:22px;height:10.5px;background:#ececec;border:1px solid #505050;border-radius:1px;box-sizing:border-box;background:#e6e6e6;"></div>
<div class="t" style="left:773.40px;width:20px;text-align:center;transform:scaleX(0.8696);transform-origin:50% 0;top:31.75px;font-size:6.44px;line-height:6.44px;color:#707070;">Set</div>
<div style="left:693.6px;top:43px;width:37.6px;height:10.8px;background:#ececec;border:1px solid #505050;border-radius:1px;box-sizing:border-box;background:#e6e6e6;"></div>
<svg style="left:701px;top:44.5px;" width="6" height="8" viewBox="0 0 6 8"><path d="M3 0.8 V6.8 M0.8 4.6 L3 6.9 L5.2 4.6" fill="none" stroke="#101010" stroke-width="1.1"/></svg>
<div class="t" style="left:708px;transform:scaleX(0.8696);transform-origin:0 0;top:45.95px;font-size:6.44px;line-height:6.44px;color:#707070;">Cool</div>
<div style="left:733px;top:43px;width:37.5px;height:10.8px;background:#ececec;border:1px solid #505050;border-radius:1px;box-sizing:border-box;background:#e6e6e6;"></div>
<svg style="left:741px;top:44.5px;" width="6" height="8" viewBox="0 0 6 8"><path d="M3 7.2 V1.2 M0.8 3.4 L3 1.1 L5.2 3.4" fill="none" stroke="#101010" stroke-width="1.1"/></svg>
<div class="t" style="left:748px;transform:scaleX(0.8696);transform-origin:0 0;top:45.95px;font-size:6.44px;line-height:6.44px;color:#707070;">Warm</div>
<div style="left:772.4px;top:43px;width:22px;height:10.8px;background:#ececec;border:1px solid #505050;border-radius:1px;box-sizing:border-box;background:#e6e6e6;"></div>
<div class="t" style="left:772.40px;width:22px;text-align:center;transform:scaleX(0.8696);transform-origin:50% 0;top:45.66px;font-size:6.21px;line-height:6.21px;color:#707070;">Abort</div>
<div style="left:693.6px;top:55px;width:100.8px;height:4.2px;background:#f8f8f8;border:0.8px solid #505050;border-radius:1.5px;box-sizing:border-box;"></div>
<div style="left:689px;top:68px;width:111px;height:8px;background:#dadada;border-top:1px solid #fafafa;border-bottom:1px solid #f2f2f2;border-left:1px solid #9a9a9a;box-sizing:border-box;"></div>
<div class="t" style="left:692.4px;transform:scaleX(0.8696);transform-origin:0 0;top:69.47px;font-size:6.79px;line-height:6.79px;color:#1a1a1a;">Focus Control</div>
<svg style="left:783px;top:69.5px;" width="6" height="5" viewBox="0 0 6 5"><path d="M0.6 1.5 H5 L2.8 3.8Z" fill="#101010"/></svg>
<svg style="left:791.3px;top:68.8px;" width="7" height="7" viewBox="0 0 7 7"><path d="M1.2 1.2 L5.8 5.8 M5.8 1.2 L1.2 5.8" stroke="#101010" stroke-width="0.95"/></svg>
<div style="left:689px;top:76px;width:111px;height:150px;background:#c6c6c6;border:1px solid #3a3a3a;border-right:2px solid #333333;box-sizing:border-box;"></div>
<div style="left:796.5px;top:77px;width:1px;height:148px;background:#d8d8d8;"></div>
<div class="t" style="left:695.3px;transform:scaleX(0.8696);transform-origin:0 0;top:78.95px;font-size:6.44px;line-height:6.44px;color:#141414;">Focus Data</div>
<div style="left:695px;top:86.2px;width:97px;height:1.4px;background:#7a7a7a;"></div>
<svg style="left:694.8px;top:89.5px;" width="7" height="7" viewBox="0 0 7 7"><circle cx="2.6" cy="4.4" r="1.8" fill="none" stroke="#202020" stroke-width="1"/><circle cx="5.2" cy="1.8" r="1.3" fill="#d08a10"/></svg>
<svg style="left:695.8px;top:97.5px;" width="4.5" height="8" viewBox="0 0 4.5 8"><rect x="0.8" y="0.5" width="2.9" height="7" rx="1.4" fill="#e8d090" stroke="#707070" stroke-width="0.5"/><circle cx="2.25" cy="5.8" r="1.1" fill="#c07000"/></svg>
<svg style="left:694.5px;top:115.5px;" width="7" height="7" viewBox="0 0 7 7"><circle cx="3.5" cy="3.5" r="2.7" fill="none" stroke="#202020" stroke-width="0.8"/><path d="M3.5 2 V3.6 L4.6 4.3" fill="none" stroke="#202020" stroke-width="0.6"/></svg>
<svg style="left:694.5px;top:124.5px;" width="7" height="7" viewBox="0 0 7 7"><circle cx="3.5" cy="3.5" r="2.6" fill="none" stroke="#707070" stroke-width="0.7"/><path d="M3.5 0.3 V6.7 M0.3 3.5 H6.7" stroke="#707070" stroke-width="0.5"/></svg>
<div class="t" style="left:703.3px;transform:scaleX(0.8696);transform-origin:0 0;top:90.32px;font-size:6.09px;line-height:6.09px;color:#141414;">Current position:</div>
<div class="t" style="left:751.9px;transform:scaleX(0.8696);transform-origin:0 0;top:90.36px;font-size:6.21px;line-height:6.21px;color:#141414;">0</div>
<div class="t" style="left:703.3px;transform:scaleX(0.8696);transform-origin:0 0;top:98.82px;font-size:6.09px;line-height:6.09px;color:#141414;">Temperature:</div>
<div class="t" style="left:751.9px;transform:scaleX(0.8696);transform-origin:0 0;top:98.86px;font-size:6.21px;line-height:6.21px;color:#141414;">NA</div>
<div class="t" style="left:703.3px;transform:scaleX(0.8696);transform-origin:0 0;top:107.82px;font-size:6.09px;line-height:6.09px;color:#141414;">Last focus temp:</div>
<div class="t" style="left:751.9px;transform:scaleX(0.8696);transform-origin:0 0;top:107.86px;font-size:6.21px;line-height:6.21px;color:#141414;">NA</div>
<div class="t" style="left:703.3px;transform:scaleX(0.8696);transform-origin:0 0;top:116.22px;font-size:6.09px;line-height:6.09px;color:#141414;">Last focus time:</div>
<div class="t" style="left:751.9px;transform:scaleX(0.8696);transform-origin:0 0;top:116.26px;font-size:6.21px;line-height:6.21px;color:#141414;">NA</div>
<div class="t" style="left:703.3px;transform:scaleX(0.8696);transform-origin:0 0;top:125.22px;font-size:6.09px;line-height:6.09px;color:#141414;">Baseline metric:</div>
<div class="t" style="left:751.9px;transform:scaleX(0.8696);transform-origin:0 0;top:125.26px;font-size:6.21px;line-height:6.21px;color:#141414;">NA</div>
<div class="t" style="left:695.3px;transform:scaleX(0.8696);transform-origin:0 0;top:134.20px;font-size:6.32px;line-height:6.32px;color:#141414;">Auto Focus</div>
<div style="left:695px;top:141.5px;width:97px;height:1.4px;background:#7a7a7a;"></div>
<svg style="left:694.5px;top:145.5px;" width="7" height="7" viewBox="0 0 7 7"><rect x="0.5" y="0.8" width="6" height="5.4" fill="#f0d890" stroke="#404040" stroke-width="0.6"/><circle cx="3.5" cy="3.5" r="1" fill="#c07000"/></svg>
<div class="t" style="left:703.5px;transform:scaleX(0.8696);transform-origin:0 0;top:146.52px;font-size:6.09px;line-height:6.09px;color:#141414;">Min star size at 1x1 (px):</div>
<div style="left:765.3px;top:144.7px;width:28.1px;height:9.3px;background:#ffffff;border:1px solid #585858;border-radius:1px;box-sizing:border-box;"></div>
<div style="left:784.1999999999999px;top:145.5px;width:8.4px;height:3.8500000000000005px;background:#e6e6e6;border:0.8px solid #707070;box-sizing:border-box;"></div>
<div style="left:784.1999999999999px;top:149.35px;width:8.4px;height:3.8500000000000005px;background:#e6e6e6;border:0.8px solid #707070;box-sizing:border-box;"></div>
<svg style="left:784.1999999999999px;top:144.7px;" width="8.4" height="9.3" viewBox="0 0 8.4 9.3"><path d="M2.3 3.55 L4.2 1.55 L6.1 3.55Z M2.3 5.75 L4.2 7.75 L6.1 5.75Z" fill="#202020"/></svg>
<div class="t" style="left:767.3px;transform:scaleX(0.8696);transform-origin:0 0;top:146.57px;font-size:6.09px;line-height:6.09px;color:#8090b0;">6</div>
<div style="left:693.5px;top:157.3px;width:48.8px;height:10.9px;background:#ececec;border:1px solid #505050;border-radius:1px;box-sizing:border-box;background:#ececec;"></div>
<svg style="left:710px;top:159px;" width="7" height="7.5" viewBox="0 0 7 7.5"><path d="M1 0.8 L6.3 3.75 L1 6.7Z" fill="#151515"/></svg>
<div class="t" style="left:718px;transform:scaleX(0.8696);transform-origin:0 0;top:160.15px;font-size:6.44px;line-height:6.44px;color:#141414;">Run</div>
<div style="left:744.8px;top:157.3px;width:48.8px;height:10.9px;background:#ececec;border:1px solid #505050;border-radius:1px;box-sizing:border-box;background:#ececec;"></div>
<svg style="left:754.3px;top:158.8px;" width="8" height="8" viewBox="0 0 8 8"><circle cx="4" cy="4" r="2.5" fill="none" stroke="#151515" stroke-width="1.4"/><rect x="3.4" y="0.1" width="1.2" height="1.8" fill="#151515" transform="rotate(0 4 4)"/><rect x="3.4" y="0.1" width="1.2" height="1.8" fill="#151515" transform="rotate(45 4 4)"/><rect x="3.4" y="0.1" width="1.2" height="1.8" fill="#151515" transform="rotate(90 4 4)"/><rect x="3.4" y="0.1" width="1.2" height="1.8" fill="#151515" transform="rotate(135 4 4)"/><rect x="3.4" y="0.1" width="1.2" height="1.8" fill="#151515" transform="rotate(180 4 4)"/><rect x="3.4" y="0.1" width="1.2" height="1.8" fill="#151515" transform="rotate(225 4 4)"/><rect x="3.4" y="0.1" width="1.2" height="1.8" fill="#151515" transform="rotate(270 4 4)"/><rect x="3.4" y="0.1" width="1.2" height="1.8" fill="#151515" transform="rotate(315 4 4)"/></svg>
<div class="t" style="left:763px;transform:scaleX(0.8696);transform-origin:0 0;top:160.15px;font-size:6.44px;line-height:6.44px;color:#141414;">Settings</div>
<div class="t" style="left:695.2px;transform:scaleX(0.8696);transform-origin:0 0;top:173.22px;font-size:6.09px;line-height:6.09px;color:#141414;">Manual Focus Control</div>
<div style="left:695px;top:181.1px;width:96.5px;height:1.4px;background:#7a7a7a;"></div>
<svg style="left:693.5px;top:185.5px;" width="5" height="9" viewBox="0 0 5 9"><path d="M2.5 8.5 V1.2 M0.5 3.3 L2.5 1.1 L4.5 3.3" fill="none" stroke="#101010" stroke-width="1.1"/></svg>
<div class="t" style="left:703.3px;transform:scaleX(0.8696);transform-origin:0 0;top:187.56px;font-size:6.21px;line-height:6.21px;color:#141414;">In:</div>
<svg style="left:693.5px;top:209px;" width="5" height="9" viewBox="0 0 5 9"><path d="M2.5 0.5 V7.8 M0.5 5.7 L2.5 7.9 L4.5 5.7" fill="none" stroke="#101010" stroke-width="1.1"/></svg>
<div class="t" style="left:699px;transform:scaleX(0.8696);transform-origin:0 0;top:210.86px;font-size:6.21px;line-height:6.21px;color:#141414;">Out:</div>
<div class="t" style="left:695.2px;transform:scaleX(0.8696);transform-origin:0 0;top:198.76px;font-size:6.21px;line-height:6.21px;color:#141414;">Steps:</div>
<div style="left:710.8px;top:185.4px;width:26.6px;height:9.6px;background:#ececec;border:1px solid #505050;border-radius:1px;box-sizing:border-box;background:#e2e2e2;"></div>
<div class="t" style="left:707.80px;width:32.6px;text-align:center;transform:scaleX(0.8696);transform-origin:50% 0;top:187.67px;font-size:6.79px;line-height:6.79px;color:#8a8a8a;">Fine</div>
<div style="left:739.1px;top:185.4px;width:26.5px;height:9.6px;background:#ececec;border:1px solid #505050;border-radius:1px;box-sizing:border-box;background:#e2e2e2;"></div>
<div class="t" style="left:736.10px;width:32.5px;text-align:center;transform:scaleX(0.8696);transform-origin:50% 0;top:187.67px;font-size:6.79px;line-height:6.79px;color:#8a8a8a;">Coarse</div>
<div style="left:767.3px;top:185.4px;width:26.3px;height:9.6px;background:#ececec;border:1px solid #505050;border-radius:1px;box-sizing:border-box;background:#e2e2e2;"></div>
<div class="t" style="left:764.30px;width:32.3px;text-align:center;transform:scaleX(0.8696);transform-origin:50% 0;top:187.67px;font-size:6.79px;line-height:6.79px;color:#8a8a8a;">Zero</div>
<div style="left:710.8px;top:208.8px;width:26.6px;height:9.6px;background:#ececec;border:1px solid #505050;border-radius:1px;box-sizing:border-box;background:#e2e2e2;"></div>
<div class="t" style="left:707.80px;width:32.6px;text-align:center;transform:scaleX(0.8696);transform-origin:50% 0;top:211.07px;font-size:6.79px;line-height:6.79px;color:#8a8a8a;">Fine</div>
<div style="left:739.1px;top:208.8px;width:26.5px;height:9.6px;background:#ececec;border:1px solid #505050;border-radius:1px;box-sizing:border-box;background:#e2e2e2;"></div>
<div class="t" style="left:736.10px;width:32.5px;text-align:center;transform:scaleX(0.8696);transform-origin:50% 0;top:211.07px;font-size:6.79px;line-height:6.79px;color:#8a8a8a;">Coarse</div>
<div style="left:767.3px;top:208.8px;width:26.3px;height:9.6px;background:#ececec;border:1px solid #505050;border-radius:1px;box-sizing:border-box;background:#e2e2e2;"></div>
<div class="t" style="left:764.30px;width:32.3px;text-align:center;transform:scaleX(0.8696);transform-origin:50% 0;top:211.07px;font-size:6.79px;line-height:6.79px;color:#8a8a8a;">Stop</div>
<div style="left:710.8px;top:197px;width:26.6px;height:9.2px;background:#ffffff;border:1px solid #585858;border-radius:1px;box-sizing:border-box;"></div>
<div style="left:728.1999999999999px;top:197.8px;width:8.4px;height:3.8px;background:#e6e6e6;border:0.8px solid #707070;box-sizing:border-box;"></div>
<div style="left:728.1999999999999px;top:201.6px;width:8.4px;height:3.8px;background:#e6e6e6;border:0.8px solid #707070;box-sizing:border-box;"></div>
<svg style="left:728.1999999999999px;top:197px;" width="8.4" height="9.2" viewBox="0 0 8.4 9.2"><path d="M2.3 3.50 L4.2 1.50 L6.1 3.50Z M2.3 5.70 L4.2 7.70 L6.1 5.70Z" fill="#202020"/></svg>
<div class="t" style="left:712.8px;transform:scaleX(0.8696);transform-origin:0 0;top:198.82px;font-size:6.09px;line-height:6.09px;color:#141414;">10</div>
<div style="left:739.1px;top:197px;width:26.5px;height:9.2px;background:#ffffff;border:1px solid #585858;border-radius:1px;box-sizing:border-box;"></div>
<div style="left:756.4px;top:197.8px;width:8.4px;height:3.8px;background:#e6e6e6;border:0.8px solid #707070;box-sizing:border-box;"></div>
<div style="left:756.4px;top:201.6px;width:8.4px;height:3.8px;background:#e6e6e6;border:0.8px solid #707070;box-sizing:border-box;"></div>
<svg style="left:756.4px;top:197px;" width="8.4" height="9.2" viewBox="0 0 8.4 9.2"><path d="M2.3 3.50 L4.2 1.50 L6.1 3.50Z M2.3 5.70 L4.2 7.70 L6.1 5.70Z" fill="#202020"/></svg>
<div class="t" style="left:741.1px;transform:scaleX(0.8696);transform-origin:0 0;top:198.82px;font-size:6.09px;line-height:6.09px;color:#141414;">100</div>
<div style="left:767.3px;top:197px;width:26.3px;height:9.2px;background:#ececec;border:1px solid #505050;border-radius:1px;box-sizing:border-box;background:#e2e2e2;"></div>
<div class="t" style="left:765.45px;width:30px;text-align:center;transform:scaleX(0.8696);transform-origin:50% 0;top:199.07px;font-size:6.79px;line-height:6.79px;color:#8a8a8a;">Go To</div>
<div style="left:689px;top:229px;width:111px;height:8px;background:#dadada;border-top:1px solid #fafafa;border-bottom:1px solid #f2f2f2;border-left:1px solid #9a9a9a;box-sizing:border-box;"></div>
<div class="t" style="left:692.4px;transform:scaleX(0.8696);transform-origin:0 0;top:230.47px;font-size:6.79px;line-height:6.79px;color:#1a1a1a;">Telescope</div>
<svg style="left:783px;top:230.5px;" width="6" height="5" viewBox="0 0 6 5"><path d="M0.6 1.5 H5 L2.8 3.8Z" fill="#101010"/></svg>
<svg style="left:791.3px;top:229.8px;" width="7" height="7" viewBox="0 0 7 7"><path d="M1.2 1.2 L5.8 5.8 M5.8 1.2 L1.2 5.8" stroke="#101010" stroke-width="0.95"/></svg>
<div style="left:689px;top:237px;width:111px;height:83px;background:#c6c6c6;border:1px solid #3a3a3a;border-right:2px solid #333333;box-sizing:border-box;"></div>
<div style="left:796.5px;top:238px;width:1px;height:81px;background:#d8d8d8;"></div>
<div class="t" style="left:695.4px;transform:scaleX(0.8696);transform-origin:0 0;top:241.98px;font-size:5.98px;line-height:5.98px;color:#141414;">Current Position (J2000)</div>
<div style="left:695px;top:249.7px;width:96.60000000000002px;height:1.4px;background:#7a7a7a;"></div>
<svg style="left:694.3px;top:253.5px;" width="7.5" height="7.5" viewBox="0 0 7.5 7.5"><path d="M0.8 6.8 L4.4 3.2" stroke="#202020" stroke-width="1.2"/><circle cx="5.4" cy="2.2" r="1.8" fill="#202020"/></svg>
<svg style="left:694.3px;top:261.5px;" width="7.5" height="7.5" viewBox="0 0 7.5 7.5"><circle cx="3.7" cy="3.7" r="3.2" fill="#6a6a6a" stroke="#404040" stroke-width="0.5"/><path d="M0.6 3.7 H6.8 M3.7 0.6 V6.8" stroke="#b0b0b0" stroke-width="0.45"/><ellipse cx="3.7" cy="3.7" rx="1.5" ry="3.1" fill="none" stroke="#b0b0b0" stroke-width="0.45"/></svg>
<svg style="left:694.3px;top:279.3px;" width="7.5" height="7.5" viewBox="0 0 7.5 7.5"><circle cx="3.7" cy="3.7" r="3" fill="#f4f4f4" stroke="#303030" stroke-width="0.8"/><path d="M3.7 1.8 V3.9 L5 4.8" fill="none" stroke="#c07000" stroke-width="0.8"/></svg>
<div class="t" style="left:702.6px;transform:scaleX(0.8696);transform-origin:0 0;top:254.52px;font-size:6.09px;line-height:6.09px;color:#141414;">Status:</div>
<div class="t" style="left:744px;transform:scaleX(0.8696);transform-origin:0 0;top:254.56px;font-size:6.21px;line-height:6.21px;color:#141414;">Tracking (on West)</div>
<div class="t" style="left:702.6px;transform:scaleX(0.8696);transform-origin:0 0;top:262.32px;font-size:6.09px;line-height:6.09px;color:#141414;">Current RA:</div>
<div class="t" style="left:744px;transform:scaleX(0.8696);transform-origin:0 0;top:262.36px;font-size:6.21px;line-height:6.21px;color:#141414;">02h21m04.02s</div>
<div class="t" style="left:702.6px;transform:scaleX(0.8696);transform-origin:0 0;top:271.42px;font-size:6.09px;line-height:6.09px;color:#141414;">Current Dec:</div>
<div class="t" style="left:744px;transform:scaleX(0.8696);transform-origin:0 0;top:271.46px;font-size:6.21px;line-height:6.21px;color:#141414;">49°41'27.11"</div>
<div class="t" style="left:702.6px;transform:scaleX(0.8696);transform-origin:0 0;top:280.22px;font-size:6.09px;line-height:6.09px;color:#141414;">Time to Pier Flip:</div>
<div class="t" style="left:744px;transform:scaleX(0.8696);transform-origin:0 0;top:280.26px;font-size:6.21px;line-height:6.21px;color:#141414;">-00:20:38</div>
<div class="t" style="left:771.4px;transform:scaleX(0.8696);transform-origin:0 0;top:280.26px;font-size:6.21px;line-height:6.21px;color:#141414;">4:02 PM</div>
<div class="t" style="left:695.4px;transform:scaleX(0.8696);transform-origin:0 0;top:291.52px;font-size:6.09px;line-height:6.09px;color:#141414;">Actions</div>
<div style="left:695px;top:299.7px;width:96.60000000000002px;height:1.4px;background:#7a7a7a;"></div>
<div style="left:694.3px;top:304.3px;width:47.9px;height:11.2px;background:#ececec;border:1px solid #505050;border-radius:1px;box-sizing:border-box;background:#ececec;"></div>
<svg style="left:709px;top:306.3px;" width="8" height="7.5" viewBox="0 0 8 7.5"><path d="M0.8 3.8 L4 0.9 L7.2 3.8" fill="none" stroke="#b07000" stroke-width="1"/><rect x="2" y="3.6" width="4" height="3.2" fill="#e0a030" stroke="#604010" stroke-width="0.5"/></svg>
<div class="t" style="left:718px;transform:scaleX(0.8696);transform-origin:0 0;top:307.35px;font-size:6.44px;line-height:6.44px;color:#141414;">Park</div>
<div style="left:745.3px;top:304.3px;width:48.2px;height:11.2px;background:#ececec;border:1px solid #505050;border-radius:1px;box-sizing:border-box;background:#ececec;"></div>
<svg style="left:753.5px;top:306.5px;" width="9" height="7" viewBox="0 0 9 7"><circle cx="2.8" cy="4" r="2.1" fill="#d8a040" stroke="#303030" stroke-width="0.7"/><circle cx="6.4" cy="4" r="2.1" fill="#d8a040" stroke="#303030" stroke-width="0.7"/></svg>
<div class="t" style="left:763.5px;transform:scaleX(0.8696);transform-origin:0 0;top:307.35px;font-size:6.44px;line-height:6.44px;color:#141414;">Set Park</div>
<div style="left:689px;top:324.5px;width:111px;height:8px;background:#dadada;border-top:1px solid #fafafa;border-bottom:1px solid #f2f2f2;border-left:1px solid #9a9a9a;box-sizing:border-box;"></div>
<div class="t" style="left:692.4px;transform:scaleX(0.8696);transform-origin:0 0;top:325.97px;font-size:6.79px;line-height:6.79px;color:#1a1a1a;">Filter Wheel</div>
<svg style="left:783px;top:326.0px;" width="6" height="5" viewBox="0 0 6 5"><path d="M0.6 1.5 H5 L2.8 3.8Z" fill="#101010"/></svg>
<svg style="left:791.3px;top:325.3px;" width="7" height="7" viewBox="0 0 7 7"><path d="M1.2 1.2 L5.8 5.8 M5.8 1.2 L1.2 5.8" stroke="#101010" stroke-width="0.95"/></svg>
<div style="left:689px;top:332.3px;width:111px;height:40px;background:#c6c6c6;border:1px solid #3a3a3a;border-right:2px solid #333333;box-sizing:border-box;"></div>
<div style="left:796.5px;top:333.3px;width:1px;height:38px;background:#d8d8d8;"></div>
<svg style="left:693.8px;top:336.8px;" width="7" height="7" viewBox="0 0 7 7"><circle cx="3.5" cy="3.5" r="3" fill="#c88a20" stroke="#404040" stroke-width="0.6"/></svg>
<div class="t" style="left:702.7px;transform:scaleX(0.8696);transform-origin:0 0;top:337.56px;font-size:6.21px;line-height:6.21px;color:#141414;">Current filter:</div>
<div class="t" style="left:736.6px;transform:scaleX(0.8696);transform-origin:0 0;top:337.56px;font-size:6.21px;line-height:6.21px;color:#141414;">L</div>
<div style="left:693.4px;top:346.2px;width:70.80000000000007px;height:1.4px;background:#7a7a7a;"></div>
<div class="t" style="left:694px;transform:scaleX(0.8696);transform-origin:0 0;top:349.62px;font-size:6.09px;line-height:6.09px;color:#141414;">Set filter position:</div>
<div style="left:693.4px;top:357.1px;width:47.1px;height:9.7px;background:#f8f8f8;border:1px solid #585858;border-radius:1px;box-sizing:border-box;"></div>
<div style="left:732px;top:358px;width:7.8px;height:8px;background:#e4e4e4;border-left:0.6px solid #b0b0b0;box-sizing:border-box;"></div>
<svg style="left:732px;top:358px;" width="8" height="8" viewBox="0 0 8 8"><path d="M2 3 H6 L4 5.2Z" fill="#101010"/></svg>
<div style="left:743px;top:357.1px;width:21.7px;height:9.7px;background:#ececec;border:1px solid #505050;border-radius:1px;box-sizing:border-box;background:#f4f4f4;"></div>
<div class="t" style="left:743.85px;width:20px;text-align:center;transform:scaleX(0.8696);transform-origin:50% 0;top:359.35px;font-size:6.44px;line-height:6.44px;color:#202020;">Set</div>
<svg style="left:768.5px;top:337.8px;" width="25" height="25" viewBox="0 0 25 25"><defs><linearGradient id="fw" x1="0.2" y1="0.1" x2="0.8" y2="0.9"><stop offset="0" stop-color="#2a2a2a"/><stop offset="0.55" stop-color="#5a5a5a"/><stop offset="1" stop-color="#b8b8b8"/></linearGradient></defs><circle cx="12.6" cy="12.6" r="11.6" fill="#101010"/><circle cx="12.6" cy="12.6" r="9.6" fill="url(#fw)"/></svg>
<div style="left:689px;top:375.9px;width:111px;height:8px;background:#dadada;border-top:1px solid #fafafa;border-bottom:1px solid #f2f2f2;border-left:1px solid #9a9a9a;box-sizing:border-box;"></div>
<div class="t" style="left:692.4px;transform:scaleX(0.8696);transform-origin:0 0;top:377.37px;font-size:6.79px;line-height:6.79px;color:#1a1a1a;">Flat Box</div>
<svg style="left:783px;top:377.4px;" width="6" height="5" viewBox="0 0 6 5"><path d="M0.6 1.5 H5 L2.8 3.8Z" fill="#101010"/></svg>
<svg style="left:791.3px;top:376.7px;" width="7" height="7" viewBox="0 0 7 7"><path d="M1.2 1.2 L5.8 5.8 M5.8 1.2 L1.2 5.8" stroke="#101010" stroke-width="0.95"/></svg>
<div style="left:689px;top:383px;width:111px;height:40px;background:#c6c6c6;border:1px solid #3a3a3a;border-right:2px solid #333333;box-sizing:border-box;"></div>
<div style="left:796.5px;top:384px;width:1px;height:38px;background:#d8d8d8;"></div>
<svg style="left:693.4px;top:387px;" width="6.5" height="6.5" viewBox="0 0 6.5 6.5"><circle cx="3.25" cy="3.25" r="2.7" fill="#fafafa" stroke="#202020" stroke-width="0.7"/><path d="M3.25 0.55 A2.7 2.7 0 0 0 3.25 5.95Z" fill="#202020"/></svg>
<div class="t" style="left:701.2px;transform:scaleX(0.8696);transform-origin:0 0;top:387.50px;font-size:6.32px;line-height:6.32px;color:#141414;">Brightness:</div>
<div style="left:727.5px;top:386.3px;width:67px;height:8.7px;background:#ececec;border:0.8px solid #d0d0d0;box-sizing:border-box;"></div>
<div style="left:729.3px;top:387.3px;width:5.5px;height:6.5px;background:#e4e4e4;border:0.8px solid #c8c8c8;box-sizing:border-box;"></div>
<div style="left:730.6px;top:390.2px;width:3px;height:0.8px;background:#a8a8a8;"></div>
<div style="left:787.5px;top:387.3px;width:5.5px;height:6.5px;background:#e4e4e4;border:0.8px solid #c8c8c8;box-sizing:border-box;"></div>
<div style="left:788.8px;top:390.2px;width:3px;height:0.8px;background:#a8a8a8;"></div>
<div style="left:789.9px;top:389px;width:0.8px;height:3.3px;background:#a8a8a8;"></div>
<div style="left:737.5px;top:390.2px;width:48px;height:0.8px;background:#606060;"></div>
<div style="left:737.5px;top:388.5px;width:0.8px;height:3.5px;background:#a0a0a0;"></div>
<div style="left:760.8px;top:388.4px;width:0.9px;height:4px;background:#303030;"></div>
<div class="t" style="left:733.70px;width:8px;text-align:center;transform:scaleX(0.8696);transform-origin:50% 0;top:396.46px;font-size:6.21px;line-height:6.21px;color:#202020;">0</div>
<div class="t" style="left:757.00px;width:8px;text-align:center;transform:scaleX(0.8696);transform-origin:50% 0;top:396.46px;font-size:6.21px;line-height:6.21px;color:#202020;">0</div>
<div class="t" style="left:779.60px;width:16px;text-align:center;transform:scaleX(0.8696);transform-origin:50% 0;top:396.46px;font-size:6.21px;line-height:6.21px;color:#202020;">255</div>
<svg style="left:694px;top:406px;" width="5" height="6" viewBox="0 0 5 6"><path d="M0.5 0.8 H4.5 M2.5 0.8 V5.5" stroke="#b08040" stroke-width="0.8"/></svg>
<div class="t" style="left:701.6px;transform:scaleX(0.8696);transform-origin:0 0;top:406.86px;font-size:6.21px;line-height:6.21px;color:#141414;">Shutter:</div>
<div style="left:733px;top:406px;width:29px;height:9px;background:#5a5a5a;border:1px solid #303030;border-radius:5px;box-sizing:border-box;"></div>
<div style="left:735px;top:407.5px;width:6px;height:6px;background:#8a8a8a;border-radius:3px;"></div>
<div class="t" style="left:769.6px;transform:scaleX(0.8696);transform-origin:0 0;top:406.86px;font-size:6.21px;line-height:6.21px;color:#141414;">Open</div>
<div style="left:608.3px;top:411.6px;width:192px;height:42.1px;background:#ffd500;border-left:1.5px solid #2e3450;border-top:1.4px solid #2e3450;box-sizing:border-box;"></div>
<div style="left:608.3px;top:453.7px;width:192px;height:1.5px;background:#a8acb8;"></div>
<svg style="left:612px;top:415.5px;" width="22" height="22" viewBox="0 0 22 22"><circle cx="11" cy="11" r="9.4" fill="none" stroke="#2e3450" stroke-width="1.7"/><path d="M9.6 5 H12.4 L11.7 13.5 H10.3Z" fill="#c08000"/><rect x="9.8" y="14.8" width="2.4" height="2.4" fill="#c08000"/></svg>
<div class="t" style="left:639.8px;transform:scaleX(0.8696);transform-origin:0 0;top:415.95px;font-size:9.2px;line-height:9.2px;color:#141414;">Sequence Warning</div>
<div class="t" style="left:640px;transform:scaleX(0.8696);transform-origin:0 0;top:426.27px;font-size:6.79px;line-height:6.79px;color:#101010;font-weight:bold;-webkit-text-stroke:0.15px currentColor;">Sequence Notification</div>
<div class="t" style="left:640px;transform:scaleX(0.8696);transform-origin:0 0;top:434.52px;font-size:6.9px;line-height:6.9px;color:#141414;">External disconnect of focuser detected...</div>
<div class="t" style="left:640px;transform:scaleX(0.8696);transform-origin:0 0;top:445.26px;font-size:6.21px;line-height:6.21px;color:#141414;">4:22:32 PM, Today</div>
<div style="left:0px;top:455px;width:800px;height:1px;background:#4a4a60;"></div>
<div style="left:0px;top:456px;width:800px;height:1px;background:#c8c8d0;"></div>
<div style="left:609.5px;top:453.6px;width:191px;height:1px;background:#e0b400;"></div>
<div style="left:609.5px;top:454.6px;width:191px;height:1.8px;background:#a4acd0;"></div>
<div style="left:0px;top:457px;width:800px;height:6px;background:#ffd500;"></div>
<div class="t" style="left:-2.5px;transform:scaleX(0.8696);transform-origin:0 0;top:460.83px;font-size:6.67px;line-height:6.67px;color:#101010;">aiting to resume</div>
<div style="left:453.4px;top:458px;width:0.7px;height:5px;background:#b8a040;"></div>
<div style="left:454.09999999999997px;top:458px;width:0.7px;height:5px;background:#fff4a0;"></div>
<div style="left:500px;top:458px;width:0.7px;height:5px;background:#b8a040;"></div>
<div style="left:500.7px;top:458px;width:0.7px;height:5px;background:#fff4a0;"></div>
<div style="left:562px;top:458px;width:0.7px;height:5px;background:#b8a040;"></div>
<div style="left:562.7px;top:458px;width:0.7px;height:5px;background:#fff4a0;"></div>
<div style="left:630.7px;top:458px;width:0.7px;height:5px;background:#b8a040;"></div>
<div style="left:631.4000000000001px;top:458px;width:0.7px;height:5px;background:#fff4a0;"></div>
<div style="left:682.4px;top:458px;width:0.7px;height:5px;background:#b8a040;"></div>
<div style="left:683.1px;top:458px;width:0.7px;height:5px;background:#fff4a0;"></div>
<div style="left:721.8px;top:458px;width:0.7px;height:5px;background:#b8a040;"></div>
<div style="left:722.5px;top:458px;width:0.7px;height:5px;background:#fff4a0;"></div>
<div style="left:762.3px;top:458px;width:0.7px;height:5px;background:#b8a040;"></div>
<div style="left:763.0px;top:458px;width:0.7px;height:5px;background:#fff4a0;"></div>
<div class="t" style="left:456.2px;transform:scaleX(0.8696);transform-origin:0 0;top:460.10px;font-size:6.32px;line-height:6.32px;color:#141414;">Focus:</div>
<div class="t" style="left:502.9px;transform:scaleX(0.8696);transform-origin:0 0;top:460.10px;font-size:6.32px;line-height:6.32px;color:#141414;">Target:</div>
<div class="t" style="left:541.7px;transform:scaleX(0.8696);transform-origin:0 0;top:460.10px;font-size:6.32px;line-height:6.32px;color:#141414;">(10:20)</div>
<div class="t" style="left:564.8px;transform:scaleX(0.8696);transform-origin:0 0;top:460.10px;font-size:6.32px;line-height:6.32px;color:#141414;">Scope:</div>
<div class="t" style="left:605.9px;transform:scaleX(0.8696);transform-origin:0 0;top:460.10px;font-size:6.32px;line-height:6.32px;color:#141414;">00:20:38</div>
<div class="t" style="left:633px;transform:scaleX(0.8696);transform-origin:0 0;top:460.10px;font-size:6.32px;line-height:6.32px;color:#141414;">Guider:</div>
<div class="t" style="left:685.2px;transform:scaleX(0.8696);transform-origin:0 0;top:460.10px;font-size:6.32px;line-height:6.32px;color:#141414;">Plate:</div>
<div class="t" style="left:701.5px;transform:scaleX(0.8696);transform-origin:0 0;top:460.10px;font-size:6.32px;line-height:6.32px;color:#141414;">(no val)</div>
<div class="t" style="left:764px;transform:scaleX(0.8696);transform-origin:0 0;top:460.10px;font-size:6.32px;line-height:6.32px;color:#141414;">Safety:</div>
<div class="t" style="left:724.6px;transform:scaleX(0.8696);transform-origin:0 0;top:460.10px;font-size:6.32px;line-height:6.32px;color:#141414;letter-spacing:1.2px;">Dome:</div>
<svg style="left:476px;top:458.5px;" width="7" height="6" viewBox="0 0 7 6"><path d="M3.5 0.3 L4.4 2.4 L6.7 2.5 L4.9 3.9 L5.5 6 L3.5 4.9 L1.5 6 L2.1 3.9 L0.3 2.5 L2.6 2.4Z" fill="#202050"/></svg>
<svg style="left:485.5px;top:458.3px;" width="7" height="7" viewBox="0 0 7 7"><circle cx="3.5" cy="3.8" r="1.8" fill="#d8c890"/></svg>
<svg style="left:492.9px;top:458.3px;" width="7" height="7" viewBox="0 0 7 7"><circle cx="3.5" cy="3.8" r="1.8" fill="#c8b070"/></svg>
<svg style="left:524.4px;top:458.3px;" width="7" height="7" viewBox="0 0 7 7"><circle cx="3.5" cy="3.8" r="2.8" fill="#8a7040"/></svg>
<svg style="left:533.7px;top:458.3px;" width="7" height="7" viewBox="0 0 7 7"><circle cx="3.5" cy="3.8" r="2.8" fill="#303030"/></svg>
<svg style="left:586.3px;top:458.3px;" width="7" height="7" viewBox="0 0 7 7"><circle cx="3.5" cy="3.8" r="1.4" fill="#707070"/></svg>
<svg style="left:595.0px;top:458.3px;" width="7" height="7" viewBox="0 0 7 7"><circle cx="3.5" cy="3.8" r="2.9" fill="#c07800"/></svg>
<svg style="left:655.2px;top:458.3px;" width="7" height="7" viewBox="0 0 7 7"><circle cx="3.5" cy="3.8" r="1.2" fill="#606060"/></svg>
<svg style="left:663.5px;top:458.3px;" width="7" height="7" viewBox="0 0 7 7"><circle cx="3.5" cy="3.8" r="2.2" fill="#707060"/></svg>
<svg style="left:671.9px;top:458.3px;" width="7" height="7" viewBox="0 0 7 7"><circle cx="3.5" cy="3.8" r="3.0" fill="#303050"/></svg>
<svg style="left:752.0px;top:458.3px;" width="7" height="7" viewBox="0 0 7 7"><circle cx="3.5" cy="3.8" r="3.4" fill="#c8c8a0"/></svg>
<svg style="left:784.6px;top:458.3px;" width="7" height="7" viewBox="0 0 7 7"><circle cx="3.5" cy="3.8" r="3.4" fill="#b01010"/></svg>
</body></html>
